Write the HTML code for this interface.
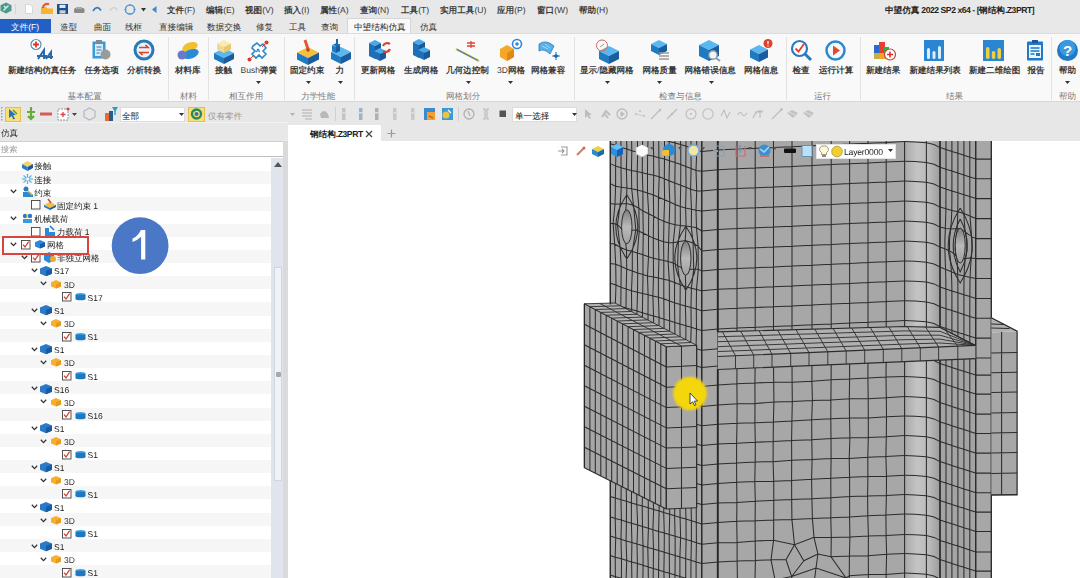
<!DOCTYPE html>
<html><head><meta charset="utf-8"><style>
html,body{margin:0;padding:0}
body{width:1080px;height:578px;overflow:hidden;position:relative;background:#fff;font-family:"Liberation Sans",sans-serif}
.t{position:absolute;white-space:nowrap;line-height:1;font-weight:700;text-rendering:geometricPrecision}
svg{overflow:visible}
.l{font-weight:400}
</style></head><body>
<div id="root" style="position:absolute;left:0;top:0;width:1080px;height:578px;overflow:hidden;filter:blur(0.4px)">
<div style="position:absolute;left:0px;top:0px;width:1080px;height:19px;background:#e8e8e8"></div>
<svg style="position:absolute;left:0px;top:2px" width="12" height="12" viewBox="0 0 12 12"><polygon points="6,0.5 11.5,3.3 11.5,8.7 6,11.5 0.5,8.7 0.5,3.3" fill="#4a9a8a"/><path d="M3.5 8.5 L8.5 3.5 M4 4 L6 6" stroke="#d8f0e8" stroke-width="1.4"/></svg>
<div style="position:absolute;left:15px;top:4px;width:1px;height:10px;background:#d4d4d4"></div>
<svg style="position:absolute;left:25px;top:4px" width="8" height="10" viewBox="0 0 8 10"><path d="M0.5 0.5h4.5l2.5 2.5v6.5h-7z" fill="#fdfdfd" stroke="#cfcfcf" stroke-width="0.8"/></svg>
<svg style="position:absolute;left:41px;top:3px" width="12" height="11" viewBox="0 0 12 11"><path d="M0 4h5l1.5 1.5H12V11H0z" fill="#f6b430"/><path d="M2 5 A4 4 0 0 1 8 1.5" stroke="#e85a2a" stroke-width="2.2" fill="none"/></svg>
<svg style="position:absolute;left:57px;top:3.5px" width="11" height="10" viewBox="0 0 11 10"><rect x="0" y="0" width="11" height="10" fill="#1f4f8a"/><rect x="2.5" y="0.8" width="6" height="3.2" fill="#dfe8f2"/><rect x="2.5" y="6.3" width="6" height="3.2" fill="#c8d2dc"/></svg>
<svg style="position:absolute;left:74px;top:6.5px" width="11" height="6" viewBox="0 0 11 6"><rect x="0" y="1" width="10.5" height="5" rx="1.5" fill="#8a8a8a"/><rect x="2" y="0" width="6" height="2" fill="#aaa"/></svg>
<svg style="position:absolute;left:92px;top:5.5px" width="10" height="6" viewBox="0 0 10 6"><path d="M1 5 Q5 -1.5 9 4.5" stroke="#3a7ab8" stroke-width="1.8" fill="none"/></svg>
<svg style="position:absolute;left:109px;top:5.5px" width="9" height="5" viewBox="0 0 9 5"><path d="M0.8 4.5 Q4.5 -1 8.3 4" stroke="#cfcfcf" stroke-width="1.5" fill="none"/></svg>
<svg style="position:absolute;left:124px;top:3.5px" width="12" height="11" viewBox="0 0 12 11"><circle cx="6" cy="5.5" r="4.6" stroke="#5a9ad0" stroke-width="1.5" fill="none"/><path d="M6 0 v2 M6 9 v2 M0.5 5.5 h2 M9.5 5.5 h2" stroke="#5a9ad0" stroke-width="1.2"/></svg>
<svg style="position:absolute;left:141px;top:8px" width="5" height="3.5" viewBox="0 0 5 3.5"><polygon points="0,0 5,0 2.5,3.5" fill="#333"/></svg>
<svg style="position:absolute;left:152px;top:6px" width="5" height="7" viewBox="0 0 5 7"><polygon points="4.5,0 4.5,7 0,3.5" fill="#3a8ad0"/></svg>
<div class="t" style="left:167px;top:6.45px;font-size:8.6px;color:#3a3a3a;">文件<span class="l">(F)</span></div>
<div class="t" style="left:206px;top:6.45px;font-size:8.6px;color:#3a3a3a;">编辑<span class="l">(E)</span></div>
<div class="t" style="left:245px;top:6.45px;font-size:8.6px;color:#3a3a3a;">视图<span class="l">(V)</span></div>
<div class="t" style="left:284px;top:6.45px;font-size:8.6px;color:#3a3a3a;">插入<span class="l">(I)</span></div>
<div class="t" style="left:320px;top:6.45px;font-size:8.6px;color:#3a3a3a;">属性<span class="l">(A)</span></div>
<div class="t" style="left:360px;top:6.45px;font-size:8.6px;color:#3a3a3a;">查询<span class="l">(N)</span></div>
<div class="t" style="left:401px;top:6.45px;font-size:8.6px;color:#3a3a3a;">工具<span class="l">(T)</span></div>
<div class="t" style="left:440px;top:6.45px;font-size:8.6px;color:#3a3a3a;">实用工具<span class="l">(U)</span></div>
<div class="t" style="left:497px;top:6.45px;font-size:8.6px;color:#3a3a3a;">应用<span class="l">(P)</span></div>
<div class="t" style="left:537px;top:6.45px;font-size:8.6px;color:#3a3a3a;">窗口<span class="l">(W)</span></div>
<div class="t" style="left:579px;top:6.45px;font-size:8.6px;color:#3a3a3a;">帮助<span class="l">(H)</span></div>
<div class="t" style="left:885px;top:6.45px;font-size:8.6px;color:#222">中望仿真<span style="letter-spacing:-0.45px"> 2022 SP2 x64 - [</span>钢结构<span style="letter-spacing:-0.45px">.Z3PRT]</span></div>
<div style="position:absolute;left:0px;top:18px;width:1080px;height:15.5px;background:#e8e8e8"></div>
<div style="position:absolute;left:0px;top:18.5px;width:51px;height:14.5px;background:#2360c4"></div>
<div class="t" style="left:11px;top:23.10px;font-size:8.6px;color:#ffffff;font-weight:500">文件<span class="l">(F)</span></div>
<div class="t" style="left:60px;top:23.10px;font-size:8.6px;color:#333;font-weight:500">造型</div>
<div class="t" style="left:94px;top:23.10px;font-size:8.6px;color:#333;font-weight:500">曲面</div>
<div class="t" style="left:125px;top:23.10px;font-size:8.6px;color:#333;font-weight:500">线框</div>
<div class="t" style="left:159px;top:23.10px;font-size:8.6px;color:#333;font-weight:500">直接编辑</div>
<div class="t" style="left:207px;top:23.10px;font-size:8.6px;color:#333;font-weight:500">数据交换</div>
<div class="t" style="left:256px;top:23.10px;font-size:8.6px;color:#333;font-weight:500">修复</div>
<div class="t" style="left:289px;top:23.10px;font-size:8.6px;color:#333;font-weight:500">工具</div>
<div class="t" style="left:321px;top:23.10px;font-size:8.6px;color:#333;font-weight:500">查询</div>
<div class="t" style="left:420px;top:23.10px;font-size:8.6px;color:#333;font-weight:500">仿真</div>
<div style="position:absolute;left:347px;top:18px;width:64px;height:17px;background:#f9f9f9;border:1px solid #d6d6d6;border-bottom:none;box-sizing:border-box"></div>
<div class="t" style="left:354px;top:23.10px;font-size:8.6px;color:#222;font-weight:500">中望结构仿真</div>
<div style="position:absolute;left:0px;top:33px;width:1080px;height:69px;background:#f9f9f9;border-top:1px solid #dcdcdc;border-bottom:1px solid #d8d8d8;box-sizing:border-box"></div>
<div style="position:absolute;left:168px;top:37px;width:1px;height:63px;background:#e2e2e2"></div>
<div style="position:absolute;left:208px;top:37px;width:1px;height:63px;background:#e2e2e2"></div>
<div style="position:absolute;left:284px;top:37px;width:1px;height:63px;background:#e2e2e2"></div>
<div style="position:absolute;left:354px;top:37px;width:1px;height:63px;background:#e2e2e2"></div>
<div style="position:absolute;left:574px;top:37px;width:1px;height:63px;background:#e2e2e2"></div>
<div style="position:absolute;left:786px;top:37px;width:1px;height:63px;background:#e2e2e2"></div>
<div style="position:absolute;left:860px;top:37px;width:1px;height:63px;background:#e2e2e2"></div>
<div style="position:absolute;left:1051px;top:37px;width:1px;height:63px;background:#e2e2e2"></div>
<div class="t" style="left:8px;top:66.32px;font-size:8.55px;color:#3a3a3a;">新建结构仿真任务</div>
<div class="t" style="left:84.5px;top:66.32px;font-size:8.55px;color:#3a3a3a;">任务选项</div>
<div class="t" style="left:127px;top:66.32px;font-size:8.55px;color:#3a3a3a;">分析转换</div>
<div class="t" style="left:175px;top:66.32px;font-size:8.55px;color:#3a3a3a;">材料库</div>
<div class="t" style="left:215px;top:66.32px;font-size:8.55px;color:#3a3a3a;">接触</div>
<div class="t" style="left:240.5px;top:66.32px;font-size:8.55px;color:#3a3a3a;"><span class="l">Bush</span>弹簧</div>
<div class="t" style="left:290px;top:66.32px;font-size:8.55px;color:#3a3a3a;">固定约束</div>
<div class="t" style="left:335.5px;top:66.32px;font-size:8.55px;color:#3a3a3a;">力</div>
<div class="t" style="left:361px;top:66.32px;font-size:8.55px;color:#3a3a3a;">更新网格</div>
<div class="t" style="left:404px;top:66.32px;font-size:8.55px;color:#3a3a3a;">生成网格</div>
<div class="t" style="left:446px;top:66.32px;font-size:8.55px;color:#3a3a3a;">几何边控制</div>
<div class="t" style="left:497px;top:66.32px;font-size:8.55px;color:#3a3a3a;"><span class="l">3D</span>网格</div>
<div class="t" style="left:531px;top:66.32px;font-size:8.55px;color:#3a3a3a;">网格兼容</div>
<div class="t" style="left:580px;top:66.32px;font-size:8.55px;color:#3a3a3a;">显示<span class="l">/</span>隐藏网格</div>
<div class="t" style="left:642.5px;top:66.32px;font-size:8.55px;color:#3a3a3a;">网格质量</div>
<div class="t" style="left:684.5px;top:66.32px;font-size:8.55px;color:#3a3a3a;">网格错误信息</div>
<div class="t" style="left:744px;top:66.32px;font-size:8.55px;color:#3a3a3a;">网格信息</div>
<div class="t" style="left:792.5px;top:66.32px;font-size:8.55px;color:#3a3a3a;">检查</div>
<div class="t" style="left:819px;top:66.32px;font-size:8.55px;color:#3a3a3a;">运行计算</div>
<div class="t" style="left:866px;top:66.32px;font-size:8.55px;color:#3a3a3a;">新建结果</div>
<div class="t" style="left:909.5px;top:66.32px;font-size:8.55px;color:#3a3a3a;">新建结果列表</div>
<div class="t" style="left:969px;top:66.32px;font-size:8.55px;color:#3a3a3a;">新建二维绘图</div>
<div class="t" style="left:1027.5px;top:66.32px;font-size:8.55px;color:#3a3a3a;">报告</div>
<div class="t" style="left:1059px;top:66.32px;font-size:8.55px;color:#3a3a3a;">帮助</div>
<div class="t" style="left:67.5px;top:91.82px;font-size:8.55px;color:#7a7a7a;font-weight:500">基本配置</div>
<div class="t" style="left:180px;top:91.82px;font-size:8.55px;color:#7a7a7a;font-weight:500">材料</div>
<div class="t" style="left:229px;top:91.82px;font-size:8.55px;color:#7a7a7a;font-weight:500">相互作用</div>
<div class="t" style="left:301px;top:91.82px;font-size:8.55px;color:#7a7a7a;font-weight:500">力学性能</div>
<div class="t" style="left:446px;top:91.82px;font-size:8.55px;color:#7a7a7a;font-weight:500">网格划分</div>
<div class="t" style="left:659px;top:91.82px;font-size:8.55px;color:#7a7a7a;font-weight:500">检查与信息</div>
<div class="t" style="left:814px;top:91.82px;font-size:8.55px;color:#7a7a7a;font-weight:500">运行</div>
<div class="t" style="left:946px;top:91.82px;font-size:8.55px;color:#7a7a7a;font-weight:500">结果</div>
<div class="t" style="left:1059px;top:91.82px;font-size:8.55px;color:#7a7a7a;font-weight:500">帮助</div>
<svg style="position:absolute;left:256px;top:81px" width="5" height="3" viewBox="0 0 5 3"><polygon points="0,0 5,0 2.5,3" fill="#333"/></svg>
<svg style="position:absolute;left:306px;top:81px" width="5" height="3" viewBox="0 0 5 3"><polygon points="0,0 5,0 2.5,3" fill="#333"/></svg>
<svg style="position:absolute;left:338px;top:81px" width="5" height="3" viewBox="0 0 5 3"><polygon points="0,0 5,0 2.5,3" fill="#333"/></svg>
<svg style="position:absolute;left:466px;top:81px" width="5" height="3" viewBox="0 0 5 3"><polygon points="0,0 5,0 2.5,3" fill="#333"/></svg>
<svg style="position:absolute;left:508px;top:81px" width="5" height="3" viewBox="0 0 5 3"><polygon points="0,0 5,0 2.5,3" fill="#333"/></svg>
<svg style="position:absolute;left:605px;top:81px" width="5" height="3" viewBox="0 0 5 3"><polygon points="0,0 5,0 2.5,3" fill="#333"/></svg>
<svg style="position:absolute;left:657px;top:81px" width="5" height="3" viewBox="0 0 5 3"><polygon points="0,0 5,0 2.5,3" fill="#333"/></svg>
<svg style="position:absolute;left:709px;top:81px" width="5" height="3" viewBox="0 0 5 3"><polygon points="0,0 5,0 2.5,3" fill="#333"/></svg>
<svg style="position:absolute;left:1065px;top:81px" width="5" height="3" viewBox="0 0 5 3"><polygon points="0,0 5,0 2.5,3" fill="#333"/></svg>
<svg style="position:absolute;left:30px;top:39px" width="26" height="23" viewBox="0 0 26 23"><circle cx="6" cy="5.5" r="5" fill="#fff" stroke="#5a8fb0" stroke-width="1.2"/><path d="M6 2.5v6M3 5.5h6" stroke="#e0302a" stroke-width="1.8"/><path d="M8 20 L14 11 L14 20 M7 17 H17 M16 20 L21 13 L21 20 M15 18 H23" stroke="#2a6aa8" stroke-width="2" fill="none"/></svg>
<svg style="position:absolute;left:91px;top:39px" width="20" height="22" viewBox="0 0 20 22"><rect x="1.5" y="2.5" width="13" height="17" fill="#3a9ad8"/><rect x="4" y="5" width="8" height="12" fill="#d8ecf8"/><rect x="5" y="1" width="6" height="3" fill="#7a8a9a"/><path d="M5.5 8h5M5.5 11h5M5.5 14h3" stroke="#3a7ab0" stroke-width="1"/><circle cx="14.5" cy="15.5" r="5" fill="#9a9a9a"/></svg>
<svg style="position:absolute;left:133px;top:39px" width="22" height="22" viewBox="0 0 22 22"><circle cx="11" cy="11" r="9" fill="#e8f2f8" stroke="#2a7ab8" stroke-width="3"/><path d="M6 8.5h9l-2.5-2.5M16 13.5H7l2.5 2.5" stroke="#e0402a" stroke-width="1.7" fill="none"/></svg>
<svg style="position:absolute;left:176px;top:39px" width="24" height="22" viewBox="0 0 24 22"><ellipse cx="14" cy="8" rx="8" ry="4.5" fill="#f0c030" transform="rotate(-20 14 8)"/><ellipse cx="15" cy="15" rx="8" ry="4.5" fill="#2a8ad8" transform="rotate(-20 15 15)"/><circle cx="6" cy="16" r="4.5" fill="#6a7ac8"/></svg>
<svg style="position:absolute;left:212px;top:39px" width="24" height="23" viewBox="0 0 24 23"><polygon points="12,9 22.0,14.0 12,19.0 2.0,14.0" fill="#5ab8f0"/><polygon points="2.0,14.0 12,19.0 12,25.0 2.0,20.0" fill="#1f7ac0"/><polygon points="22.0,14.0 12,19.0 12,25.0 22.0,20.0" fill="#1a5c9e"/><polygon points="12,1 19.0,4.5 12,8.0 5.0,4.5" fill="#f8eab0"/><polygon points="5.0,4.5 12,8.0 12,14.0 5.0,10.5" fill="#f0d890"/><polygon points="19.0,4.5 12,8.0 12,14.0 19.0,10.5" fill="#e8c870"/></svg>
<svg style="position:absolute;left:246px;top:39px" width="24" height="24" viewBox="0 0 24 24"><path d="M7 7 L11 4 L14 7 L17 5 L20 9 L17 12 L20 15 L16 19 L13 16 L10 19 L6 15 L9 12 L6 9 Z" fill="#fff" stroke="#2a8ac8" stroke-width="1.6"/><path d="M11 10 L14 13 M10 13 L13 10" stroke="#2a8ac8" stroke-width="1.2"/><circle cx="20.5" cy="3.5" r="2" fill="#d83a30"/><circle cx="3.5" cy="20.5" r="2" fill="#d83a30"/><path d="M19 5 L16 8 M5 19 L8 16" stroke="#d83a30" stroke-width="1"/></svg>
<svg style="position:absolute;left:296px;top:39px" width="24" height="23" viewBox="0 0 24 23"><polygon points="12,8 23.0,13.5 12,19.0 1.0,13.5" fill="#f5c040"/><polygon points="1.0,13.5 12,19.0 12,26.0 1.0,20.5" fill="#1f7ac0"/><polygon points="23.0,13.5 12,19.0 12,26.0 23.0,20.5" fill="#1a5c9e"/><path d="M9 1 L12 10" stroke="#e05a30" stroke-width="3"/><circle cx="12" cy="11" r="1.8" fill="#c04020"/></svg>
<svg style="position:absolute;left:328px;top:39px" width="24" height="23" viewBox="0 0 24 23"><polygon points="13,8 23.0,13.0 13,18.0 3.0,13.0" fill="#5ab8f0"/><polygon points="3.0,13.0 13,18.0 13,25.0 3.0,20.0" fill="#1f7ac0"/><polygon points="23.0,13.0 13,18.0 13,25.0 23.0,20.0" fill="#1a5c9e"/><polygon points="8,4 12.0,6.0 8,8.0 4.0,6.0" fill="#5ab8f0"/><polygon points="4.0,6.0 8,8.0 8,14.0 4.0,12.0" fill="#1f7ac0"/><polygon points="12.0,6.0 8,8.0 8,14.0 12.0,12.0" fill="#1a5c9e"/><path d="M9 0 V7" stroke="#1a6ab0" stroke-width="2"/><polygon points="5.5,5 12.5,5 9,9" fill="#1a6ab0"/></svg>
<svg style="position:absolute;left:366px;top:40px" width="26" height="23" viewBox="0 0 26 23"><g transform="translate(1,0)"><polygon points="8,0 14.0,3.0 8,6.0 2.0,3.0" fill="#4aa8e8"/><polygon points="2.0,3.0 8,6.0 8,19.0 2.0,16.0" fill="#1f6fb8"/><polygon points="14.0,3.0 8,6.0 8,19.0 14.0,16.0" fill="#165a9a"/><polygon points="13,8 19.0,11.0 13,14.0 7.0,11.0" fill="#4aa8e8"/><polygon points="7.0,11.0 13,14.0 13,21.0 7.0,18.0" fill="#1f6fb8"/><polygon points="19.0,11.0 13,14.0 13,21.0 19.0,18.0" fill="#165a9a"/></g><path d="M17 6 A4.5 4.5 0 0 1 24 4" stroke="#e0402a" stroke-width="2.2" fill="none"/><path d="M24 9 A4.5 4.5 0 0 1 17 11" stroke="#e0402a" stroke-width="2.2" fill="none"/></svg>
<svg style="position:absolute;left:410px;top:39px" width="22" height="23" viewBox="0 0 22 23"><g transform="translate(1,0)"><polygon points="8,0 14.0,3.0 8,6.0 2.0,3.0" fill="#4aa8e8"/><polygon points="2.0,3.0 8,6.0 8,19.0 2.0,16.0" fill="#1f6fb8"/><polygon points="14.0,3.0 8,6.0 8,19.0 14.0,16.0" fill="#165a9a"/><polygon points="13,8 19.0,11.0 13,14.0 7.0,11.0" fill="#4aa8e8"/><polygon points="7.0,11.0 13,14.0 13,21.0 7.0,18.0" fill="#1f6fb8"/><polygon points="19.0,11.0 13,14.0 13,21.0 19.0,18.0" fill="#165a9a"/></g></svg>
<svg style="position:absolute;left:455px;top:39px" width="26" height="24" viewBox="0 0 26 24"><path d="M1 10 L24 22" stroke="#c8c870" stroke-width="2.4"/><path d="M2 10.5 L23 21.5" stroke="#3a6aa8" stroke-width="1"/><path d="M12 4h8M12 7h8" stroke="#e04030" stroke-width="1.4"/><path d="M16 2v7" stroke="#e04030" stroke-width="1.2"/></svg>
<svg style="position:absolute;left:499px;top:39px" width="24" height="23" viewBox="0 0 24 23"><polygon points="8,6 15,10 15,18 8,22 1,18 1,10" fill="#f5a828"/><polygon points="8,14 15,10 15,18 8,22" fill="#e08a18"/><circle cx="18" cy="5" r="4.5" fill="#fff" stroke="#2a8ad8" stroke-width="1.6"/><circle cx="18" cy="5" r="1.8" fill="#2a8ad8"/></svg>
<svg style="position:absolute;left:538px;top:38px" width="24" height="24" viewBox="0 0 24 24"><path d="M1 6 Q8 1 16 8 L12 16 Q6 10 1 13 Z" fill="#5ab0e8" stroke="#2a7ac0" stroke-width="0.8"/><path d="M4 8 L10 11 M7 6 L12 10" stroke="#b8e0f8" stroke-width="0.8"/><path d="M18 14 V22 M14 18 h8" stroke="#2a8ad0" stroke-width="1.2"/><polygon points="15,18 18,16 18,20" fill="#1a6ab0"/><polygon points="21,18 18,16 18,20" fill="#1a6ab0"/></svg>
<svg style="position:absolute;left:594px;top:39px" width="26" height="23" viewBox="0 0 26 23"><polygon points="15,7 25.0,12.0 15,17.0 5.0,12.0" fill="#5ab8f0"/><polygon points="5.0,12.0 15,17.0 15,25.0 5.0,20.0" fill="#1f7ac0"/><polygon points="25.0,12.0 15,17.0 15,25.0 25.0,20.0" fill="#1a5c9e"/><circle cx="8" cy="6.5" r="5.5" fill="none" stroke="#c86a60" stroke-width="1"/><path d="M6 8 L10 5" stroke="#999" stroke-width="1"/></svg>
<svg style="position:absolute;left:649px;top:39px" width="22" height="23" viewBox="0 0 22 23"><polygon points="10,1 18.0,5.0 10,9.0 2.0,5.0" fill="#5ab8f0"/><polygon points="2.0,5.0 10,9.0 10,16.0 2.0,12.0" fill="#1f7ac0"/><polygon points="18.0,5.0 10,9.0 10,16.0 18.0,12.0" fill="#1a5c9e"/><path d="M10 14h10M10 17h10M10 20h10" stroke="#9a9a9a" stroke-width="1.5"/></svg>
<svg style="position:absolute;left:698px;top:39px" width="24" height="23" viewBox="0 0 24 23"><polygon points="11,1 21.0,6.0 11,11.0 1.0,6.0" fill="#5ab8f0"/><polygon points="1.0,6.0 11,11.0 11,22.0 1.0,17.0" fill="#1f7ac0"/><polygon points="21.0,6.0 11,11.0 11,22.0 21.0,17.0" fill="#1a5c9e"/><circle cx="15" cy="16" r="4.2" fill="#eef4f8" stroke="#8a9aa8" stroke-width="1.4"/><path d="M18 19 L22 22" stroke="#8a9aa8" stroke-width="2"/></svg>
<svg style="position:absolute;left:749px;top:39px" width="24" height="23" viewBox="0 0 24 23"><polygon points="10,6 19.0,10.5 10,15.0 1.0,10.5" fill="#5ab8f0"/><polygon points="1.0,10.5 10,15.0 10,23.0 1.0,18.5" fill="#1f7ac0"/><polygon points="19.0,10.5 10,15.0 10,23.0 19.0,18.5" fill="#1a5c9e"/><circle cx="19" cy="4.5" r="4.5" fill="#e0402a"/><path d="M19 2v3.2M19 6.5v1" stroke="#fff" stroke-width="1.3"/></svg>
<svg style="position:absolute;left:790px;top:39px" width="24" height="23" viewBox="0 0 24 23"><circle cx="9.5" cy="9.5" r="7.5" fill="#fff" stroke="#2a7ac0" stroke-width="2.2"/><path d="M15 15 L21 21" stroke="#2a7ac0" stroke-width="3"/><path d="M5.5 9.5 L8.5 12.5 L14 5" stroke="#e04030" stroke-width="1.8" fill="none"/></svg>
<svg style="position:absolute;left:824px;top:39px" width="23" height="23" viewBox="0 0 23 23"><circle cx="11.5" cy="11.5" r="9" fill="#f4f8fc" stroke="#2a8ad0" stroke-width="2.5"/><polygon points="9,6.5 16,11.5 9,16.5" fill="#e04a2a"/></svg>
<svg style="position:absolute;left:873px;top:39px" width="24" height="23" viewBox="0 0 24 23"><rect x="1" y="6" width="6" height="14" fill="#2a6ad0"/><rect x="6" y="3" width="6" height="17" fill="#e84030"/><rect x="11" y="8" width="5" height="12" fill="#30b040"/><path d="M1 14 h15 v6 h-15z" fill="#f0c020" opacity="0.8"/><circle cx="17" cy="15.5" r="5.5" fill="#fff" stroke="#c84040" stroke-width="1.2"/><path d="M17 12.5v6M14 15.5h6" stroke="#e0302a" stroke-width="1.6"/></svg>
<svg style="position:absolute;left:923px;top:39px" width="22" height="23" viewBox="0 0 22 23"><rect x="1" y="1" width="20" height="21" fill="#2a86d2"/><rect x="4" y="9" width="3" height="11" rx="1.5" fill="#d8eefc"/><rect x="9.5" y="12" width="3" height="8" rx="1.5" fill="#d8eefc"/><rect x="15" y="7" width="3" height="13" rx="1.5" fill="#d8eefc"/></svg>
<svg style="position:absolute;left:982px;top:39px" width="23" height="23" viewBox="0 0 23 23"><rect x="1" y="1" width="21" height="21" fill="#2a86d2"/><rect x="4" y="8" width="3.5" height="12" rx="1.7" fill="#f0d040"/><rect x="9.8" y="12" width="3.5" height="8" rx="1.7" fill="#f0d040"/><rect x="15.5" y="9" width="3.5" height="11" rx="1.7" fill="#f0d040"/></svg>
<svg style="position:absolute;left:1026px;top:39px" width="19" height="23" viewBox="0 0 19 23"><rect x="1" y="2.5" width="16" height="19" rx="1" fill="#1f78c8"/><rect x="3" y="6" width="12" height="13" fill="#eaf4fc"/><rect x="6" y="1" width="6" height="3" fill="#1a5a98"/><path d="M4.5 9h9M4.5 12h9M4.5 15h4" stroke="#1f78c8" stroke-width="1.3"/><rect x="10" y="14" width="4" height="3" fill="#1f78c8"/></svg>
<svg style="position:absolute;left:1056px;top:39px" width="23" height="23" viewBox="0 0 23 23"><circle cx="11.5" cy="11.5" r="10.5" fill="#1f7ac8"/><circle cx="11.5" cy="9" r="8" fill="#3a9ae0"/><text x="11.5" y="17" text-anchor="middle" font-family="Liberation Sans" font-weight="bold" font-size="15" fill="#fff">?</text></svg>
<div style="position:absolute;left:0px;top:102px;width:1080px;height:39px;background:#e7e7e7"></div>
<div style="position:absolute;left:0px;top:122px;width:288px;height:1px;background:#f2f2f2"></div>
<svg style="position:absolute;left:1px;top:107px" width="2" height="14" viewBox="0 0 2 14"><g fill="#9aa4b0"><rect x="0" y="0" width="1.5" height="1.5"/><rect x="0" y="3" width="1.5" height="1.5"/><rect x="0" y="6" width="1.5" height="1.5"/><rect x="0" y="9" width="1.5" height="1.5"/><rect x="0" y="12" width="1.5" height="1.5"/></g></svg>
<div style="position:absolute;left:5px;top:106.5px;width:15.5px;height:15.5px;background:#f7df7a;border:1px solid #e2c04a;box-sizing:border-box"></div>
<svg style="position:absolute;left:7px;top:108px" width="12" height="12" viewBox="0 0 12 12"><path d="M2 1 L2 10 L4.5 8 L6.5 11.5 L8 10.7 L6 7.3 L9 7 Z" fill="#2a70c0"/><path d="M6 2 L10 6" stroke="#40a040" stroke-width="1.4"/></svg>
<svg style="position:absolute;left:26px;top:107px" width="10" height="13" viewBox="0 0 10 13"><path d="M5 0 V12 M1 5 H9 M2 9 L5 12 L8 9" stroke="#6aaa3a" stroke-width="2.2" fill="none"/></svg>
<svg style="position:absolute;left:40px;top:112px" width="12" height="4" viewBox="0 0 12 4"><rect x="0" y="0.5" width="12" height="3" fill="#d85a5a"/></svg>
<svg style="position:absolute;left:57px;top:107px" width="13" height="14" viewBox="0 0 13 14"><rect x="1" y="2" width="10" height="11" fill="#fff" stroke="#8a9aa8" stroke-width="1" stroke-dasharray="2 1"/><path d="M6 5v5M3.5 7.5h5" stroke="#e04040" stroke-width="1.3"/><circle cx="11" cy="2" r="1.6" fill="#d04040"/></svg>
<svg style="position:absolute;left:72px;top:113px" width="5" height="3" viewBox="0 0 5 3"><polygon points="0,0 5,0 2.5,3" fill="#444"/></svg>
<svg style="position:absolute;left:83px;top:107px" width="13" height="14" viewBox="0 0 13 14"><polygon points="6.5,1 12,4 12,10 6.5,13 1,10 1,4" fill="none" stroke="#b0b8c0" stroke-width="1.2"/></svg>
<svg style="position:absolute;left:104px;top:107px" width="14" height="14" viewBox="0 0 14 14"><rect x="1" y="6" width="4" height="8" fill="#e86a30"/><rect x="5" y="4" width="4" height="10" fill="#2a5a8a"/><polygon points="8,0 14,0 11,5" fill="#2a9ac8"/><rect x="10.3" y="4" width="1.4" height="4" fill="#2a9ac8"/></svg>
<div style="position:absolute;left:120px;top:107.4px;width:65px;height:14.6px;background:#fff;border:1px solid #dcdcdc;box-sizing:border-box"></div>
<div class="t" style="left:122px;top:111.50px;font-size:8.6px;color:#111;font-weight:500">全部</div>
<svg style="position:absolute;left:179px;top:113px" width="5" height="3" viewBox="0 0 5 3"><polygon points="0,0 5,0 2.5,3" fill="#333"/></svg>
<div style="position:absolute;left:188.3px;top:106.5px;width:16.5px;height:15.5px;background:#f7df7a;border:1px solid #e2c04a;box-sizing:border-box"></div>
<svg style="position:absolute;left:190px;top:108px" width="13" height="12" viewBox="0 0 13 12"><circle cx="6.5" cy="6" r="4.5" fill="none" stroke="#2a8a5a" stroke-width="2.4"/><path d="M3 2 L6 1 L5 4" fill="#2a8a5a"/><circle cx="6.5" cy="6" r="2" fill="#3a70b0"/></svg>
<div class="t" style="left:207.8px;top:111.50px;font-size:8.6px;color:#999;font-weight:500">仅有零件</div>
<svg style="position:absolute;left:290px;top:113px" width="5" height="3" viewBox="0 0 5 3"><polygon points="0,0 5,0 2.5,3" fill="#b0b0b0"/></svg>
<svg style="position:absolute;left:301px;top:108px" width="12" height="12" viewBox="0 0 12 12"><path d="M1 2h10M1 5h10M1 8h10M4 11h7" stroke="#b0b0b0" stroke-width="1.2"/></svg>
<svg style="position:absolute;left:318px;top:108px" width="12" height="12" viewBox="0 0 12 12"><path d="M2 6 Q6 0 10 6 L11 10 H3z" fill="#b8b8b8"/></svg>
<div style="position:absolute;left:334.5px;top:107px;width:1px;height:14px;background:#d0d0d0"></div>
<svg style="position:absolute;left:341px;top:108px" width="6" height="12" viewBox="0 0 6 12"><rect x="1" y="0" width="3.5" height="12" fill="#c4c4c4"/><rect x="0" y="4" width="5.5" height="1.5" fill="#ddd"/></svg>
<svg style="position:absolute;left:357.5px;top:108px" width="6" height="12" viewBox="0 0 6 12"><rect x="1" y="0" width="3.5" height="12" fill="#9ab4cc"/><rect x="0" y="4" width="5.5" height="1.5" fill="#ddd"/></svg>
<svg style="position:absolute;left:374px;top:108px" width="6" height="12" viewBox="0 0 6 12"><rect x="1" y="0" width="3.5" height="12" fill="#b8aab8"/><rect x="0" y="4" width="5.5" height="1.5" fill="#ddd"/></svg>
<svg style="position:absolute;left:392px;top:108px" width="6" height="12" viewBox="0 0 6 12"><rect x="1" y="0" width="3.5" height="12" fill="#c8c8c8"/><rect x="0" y="4" width="5.5" height="1.5" fill="#ddd"/></svg>
<svg style="position:absolute;left:410px;top:108px" width="6" height="12" viewBox="0 0 6 12"><rect x="1" y="0" width="3.5" height="12" fill="#c8c8c8"/><rect x="0" y="4" width="5.5" height="1.5" fill="#ddd"/></svg>
<svg style="position:absolute;left:424px;top:107px" width="12" height="14" viewBox="0 0 12 14"><rect x="0" y="1" width="11" height="12" fill="#3a8ad0"/><rect x="3" y="5" width="8" height="8" fill="#f0a030"/><path d="M5 9 L9 11" stroke="#c04a20" stroke-width="1.2"/></svg>
<svg style="position:absolute;left:441px;top:107px" width="12" height="14" viewBox="0 0 12 14"><rect x="1" y="1" width="11" height="12" fill="#3a9ad8"/><circle cx="5" cy="8" r="3.5" fill="#f0c040"/><path d="M7 3 L10 6" stroke="#fff" stroke-width="1.2"/></svg>
<div style="position:absolute;left:457.8px;top:107px;width:1px;height:14px;background:#d0d0d0"></div>
<svg style="position:absolute;left:463px;top:107px" width="12" height="14" viewBox="0 0 12 14"><circle cx="6" cy="7" r="5" fill="none" stroke="#b0b0b0" stroke-width="1.3"/><path d="M5 4 L7 9" stroke="#b0b0b0" stroke-width="1.2"/></svg>
<svg style="position:absolute;left:482px;top:107px" width="8" height="14" viewBox="0 0 8 14"><path d="M1 2 H3 V12 H1 M7 2 H5 V12 H7" stroke="#b8b8b8" stroke-width="1.1" fill="none"/></svg>
<svg style="position:absolute;left:499px;top:110px" width="8" height="8" viewBox="0 0 8 8"><rect x="0.5" y="0.5" width="6.5" height="6.5" fill="#555"/></svg>
<div style="position:absolute;left:512.4px;top:107.4px;width:64.6px;height:14.6px;background:#fff;border:1px solid #dcdcdc;box-sizing:border-box"></div>
<div class="t" style="left:515px;top:111.50px;font-size:8.6px;color:#111;font-weight:500">单一选择</div>
<svg style="position:absolute;left:572px;top:113px" width="5" height="3" viewBox="0 0 5 3"><polygon points="0,0 5,0 2.5,3" fill="#333"/></svg>
<svg style="position:absolute;left:584px;top:108px" width="13" height="13" viewBox="0 0 13 13"><path d="M1 1 L1 10 L3.5 8 L5.5 11 L7 10 L5 7 L8 7 Z" fill="#bdbdbd"/></svg>
<svg style="position:absolute;left:600px;top:108px" width="13" height="13" viewBox="0 0 13 13"><path d="M2 9 L6 3 L10 7 M4 5 L8 10" stroke="#bdbdbd" stroke-width="2" fill="none"/></svg>
<svg style="position:absolute;left:616px;top:108px" width="13" height="13" viewBox="0 0 13 13"><circle cx="6" cy="6" r="5" fill="none" stroke="#bdbdbd" stroke-width="1.4"/><polygon points="4.5,3 9,6 4.5,9" fill="#bdbdbd"/></svg>
<svg style="position:absolute;left:634px;top:108px" width="13" height="13" viewBox="0 0 13 13"><circle cx="2" cy="6" r="1" fill="#bdbdbd"/><circle cx="6" cy="3" r="1" fill="#bdbdbd"/><circle cx="10" cy="8" r="1" fill="#bdbdbd"/><path d="M2 6 L10 8" stroke="#c8c8c8" stroke-width="0.8"/></svg>
<svg style="position:absolute;left:650px;top:108px" width="13" height="13" viewBox="0 0 13 13"><path d="M1 11 L11 1" stroke="#bdbdbd" stroke-width="1.2"/><circle cx="10" cy="2" r="1.2" fill="#bdbdbd"/></svg>
<svg style="position:absolute;left:666px;top:108px" width="13" height="13" viewBox="0 0 13 13"><path d="M1 11 L11 1" stroke="#bdbdbd" stroke-width="1.2"/><circle cx="6" cy="6" r="1.2" fill="#bdbdbd"/></svg>
<svg style="position:absolute;left:685px;top:108px" width="13" height="13" viewBox="0 0 13 13"><circle cx="6" cy="6" r="5" fill="none" stroke="#bdbdbd" stroke-width="1.1"/><circle cx="6" cy="6" r="1" fill="#bdbdbd"/></svg>
<svg style="position:absolute;left:702px;top:108px" width="13" height="13" viewBox="0 0 13 13"><circle cx="6" cy="6" r="5.2" fill="none" stroke="#bdbdbd" stroke-width="1.1"/></svg>
<svg style="position:absolute;left:720px;top:108px" width="13" height="13" viewBox="0 0 13 13"><path d="M1 8 L4 2 L7 10 L10 4" stroke="#bdbdbd" stroke-width="1.1" fill="none"/></svg>
<svg style="position:absolute;left:737px;top:108px" width="13" height="13" viewBox="0 0 13 13"><path d="M1 7 Q3 2 5 6 T10 5" stroke="#bdbdbd" stroke-width="1.1" fill="none"/></svg>
<svg style="position:absolute;left:752px;top:108px" width="13" height="13" viewBox="0 0 13 13"><path d="M1 10 Q5 0 11 4 M3 4 H10 M8 4 V10" stroke="#bdbdbd" stroke-width="1.1" fill="none"/></svg>
<svg style="position:absolute;left:771px;top:108px" width="13" height="13" viewBox="0 0 13 13"><path d="M1 11 L11 1" stroke="#bdbdbd" stroke-width="1.2"/><circle cx="10.5" cy="1.5" r="1.3" fill="#bdbdbd"/></svg>
<svg style="position:absolute;left:786px;top:108px" width="13" height="13" viewBox="0 0 13 13"><path d="M1 5 L6 2 L12 5 L7 10 Z" fill="#c2c2c2"/><path d="M3 4 L9 7" stroke="#e0e0e0" stroke-width="1"/></svg>
<svg style="position:absolute;left:802px;top:108px" width="13" height="13" viewBox="0 0 13 13"><path d="M1 5 L6 2 L12 5 L7 10 Z" fill="#c2c2c2"/><path d="M3 4 L9 7" stroke="#e0e0e0" stroke-width="1"/></svg>
<div style="position:absolute;left:0px;top:123px;width:288px;height:18px;background:#e8e8e8"></div>
<div class="t" style="left:1px;top:129.30px;font-size:8.6px;color:#2a2a2a;font-weight:500">仿真</div>
<div style="position:absolute;left:0px;top:141px;width:288px;height:1px;background:#d0d0d0"></div>
<div style="position:absolute;left:0px;top:142px;width:285px;height:15px;background:#ffffff;border-bottom:1px solid #bdbdbd;box-sizing:border-box"></div>
<div class="t" style="left:1px;top:146.45px;font-size:8.2px;color:#9a9a9a;font-weight:500">搜索</div>
<div style="position:absolute;left:0px;top:157px;width:288px;height:421px;background:#ffffff"></div>
<div style="position:absolute;left:288px;top:125px;width:93px;height:16px;background:#ffffff"></div>
<div class="t" style="left:310px;top:129.80px;font-size:8.6px;color:#1a1a1a">钢结构<span style="letter-spacing:-0.45px">.Z3PRT</span></div>
<svg style="position:absolute;left:365px;top:129.5px" width="8" height="8" viewBox="0 0 8 8"><path d="M1 1 L7 7 M7 1 L1 7" stroke="#444" stroke-width="1.3"/></svg>
<svg style="position:absolute;left:387px;top:129px" width="9" height="9" viewBox="0 0 9 9"><path d="M4.5 0.5 V8.5 M0.5 4.5 H8.5" stroke="#9a9a9a" stroke-width="1.2"/></svg>
<div style="position:absolute;left:288px;top:141px;width:792px;height:437px;background:#ffffff"></div>
<svg style="position:absolute;left:0;top:0" width="1080" height="578" viewBox="0 0 1080 578"><defs><clipPath id="vp"><rect x="288" y="141" width="792" height="437"/></clipPath><linearGradient id="fil" x1="0" x2="1" y1="0" y2="0"><stop offset="0" stop-color="#a9a9a9"/><stop offset="0.35" stop-color="#c4c4c4"/><stop offset="0.7" stop-color="#b9b9b9"/><stop offset="1" stop-color="#9c9c9c"/></linearGradient><linearGradient id="hole" x1="0" x2="0" y1="0" y2="1"><stop offset="0" stop-color="#7e7e7e"/><stop offset="0.5" stop-color="#bababa"/><stop offset="1" stop-color="#a0a0a0"/></linearGradient></defs><g clip-path="url(#vp)"><polygon points="610.3,100.0 701.8,100.0 701.8,600.0 610.3,600.0" fill="#a7a7a7" stroke="none" stroke-width="0"/><path d="M610.3 100.0 L610.3 104.0 L610.3 124.0 L610.3 143.8 L610.3 163.6 L610.3 183.6 L610.3 203.6 L610.3 223.6 L610.3 243.4 L610.3 263.4 L610.3 283.2 L610.3 303.1 L610.3 322.9 L610.3 340.1 L610.3 359.1 L610.3 379.1 L610.3 398.4 L610.3 418.1 L610.3 438.1 L610.3 457.7 L610.3 477.1 L610.3 496.4 L610.3 516.8 L610.3 536.0 L610.3 555.5 L610.3 575.0 L610.3 600.0 M615.7 100.0 L615.6 105.6 L615.7 125.6 L616.1 145.6 L615.6 166.1 L615.6 186.2 L615.0 204.3 L613.1 223.4 L614.7 244.1 L615.7 264.2 L616.0 285.1 L615.3 304.7 L615.5 324.5 L615.3 341.7 L616.0 360.7 L615.9 380.7 L615.2 400.0 L616.2 419.7 L616.1 439.7 L615.8 459.3 L615.8 478.7 L615.3 498.1 L615.2 518.5 L615.7 537.7 L615.2 557.2 L615.4 576.7 L615.7 600.0 M621.1 100.0 L620.8 107.2 L620.6 127.3 L621.0 147.4 L621.0 167.7 L621.3 187.2 L620.2 203.8 L617.5 224.7 L620.1 247.2 L621.2 266.6 L621.0 287.2 L620.8 306.3 L621.6 326.1 L621.6 343.3 L621.4 362.3 L621.3 382.3 L620.9 401.6 L620.8 421.3 L620.9 441.3 L620.6 460.9 L621.3 480.3 L621.0 499.7 L621.4 520.1 L621.0 539.3 L621.5 558.8 L621.4 578.3 L621.1 600.0 M626.4 100.0 L625.9 108.9 L626.2 129.0 L626.9 149.1 L626.4 169.2 L626.9 187.9 L626.3 203.5 L624.3 231.7 L626.5 250.0 L626.7 269.0 L626.2 289.1 L626.0 307.9 L626.3 327.7 L626.9 344.9 L626.7 363.9 L626.1 383.9 L626.2 403.2 L626.0 422.9 L626.0 442.9 L626.7 462.5 L626.1 481.9 L626.5 501.3 L626.4 521.7 L626.1 540.9 L626.7 560.4 L626.1 579.9 L626.4 600.0 M631.8 100.0 L632.0 110.5 L631.4 130.7 L631.8 150.8 L631.5 170.5 L631.7 188.8 L633.5 205.2 L635.8 229.8 L632.3 251.6 L632.3 271.1 L631.5 290.8 L631.7 309.5 L632.2 329.3 L632.0 346.5 L631.4 365.5 L632.3 385.5 L631.5 404.8 L631.6 424.5 L632.1 444.5 L631.7 464.1 L631.6 483.5 L631.4 502.9 L631.4 523.3 L631.9 542.5 L631.6 562.0 L631.9 581.5 L631.8 600.0 M637.2 100.0 L637.1 112.2 L637.2 132.4 L637.7 152.3 L637.2 171.6 L637.4 190.0 L638.9 208.2 L639.2 231.2 L637.4 253.1 L637.7 273.0 L637.5 292.2 L637.0 311.1 L636.9 330.9 L637.5 348.1 L637.7 367.1 L636.9 387.1 L637.7 406.4 L637.6 426.1 L637.3 446.1 L637.1 465.7 L636.8 485.1 L636.8 504.5 L637.7 524.9 L637.0 544.1 L637.4 563.6 L637.0 583.1 L637.2 600.0 M642.6 100.0 L642.9 113.9 L642.7 134.1 L642.4 153.7 L642.3 172.7 L642.9 191.5 L642.9 211.1 L643.3 233.3 L642.9 254.8 L643.0 274.6 L642.7 293.5 L642.4 312.7 L643.0 332.5 L642.3 349.7 L642.1 368.7 L642.4 388.7 L642.5 408.0 L642.2 427.7 L642.3 447.7 L642.5 467.3 L642.7 486.7 L642.2 506.1 L642.5 526.5 L643.0 545.7 L643.1 565.2 L642.8 584.7 L642.6 600.0 M648.0 100.0 L648.2 115.5 L648.1 135.6 L647.6 155.0 L647.5 173.9 L647.5 193.1 L648.7 213.7 L648.5 235.7 L648.5 256.7 L647.5 275.9 L648.1 294.7 L648.0 314.4 L648.2 334.2 L647.8 351.4 L648.5 370.4 L647.6 390.4 L648.0 409.7 L648.2 429.4 L648.4 449.4 L648.2 469.0 L648.2 488.4 L648.3 507.8 L648.4 528.2 L647.8 547.4 L648.2 566.9 L648.4 586.4 L648.0 600.0 M653.4 100.0 L653.7 117.1 L653.3 137.1 L653.6 156.3 L653.7 175.3 L653.4 195.1 L653.6 216.3 L653.3 238.1 L653.4 258.3 L653.5 277.1 L652.9 295.9 L653.5 316.0 L653.9 335.8 L653.7 353.0 L653.6 372.0 L653.2 392.0 L653.6 411.3 L653.4 431.0 L653.3 451.0 L653.7 470.6 L652.9 490.0 L653.6 509.4 L652.9 529.8 L653.5 549.0 L653.3 568.5 L653.1 588.0 L653.4 600.0 M658.7 100.0 L658.9 118.7 L658.7 138.5 L658.9 157.7 L659.2 176.8 L658.5 197.3 L658.3 218.9 L658.5 240.1 L658.9 259.6 L658.4 278.1 L658.4 297.2 L659.1 317.6 L658.9 337.4 L658.7 354.6 L659.1 373.6 L658.6 393.6 L658.9 412.9 L658.4 432.6 L658.7 452.6 L659.0 472.2 L659.2 491.6 L659.1 511.0 L658.6 531.4 L658.8 550.6 L658.6 570.1 L658.4 589.6 L658.7 600.0 M664.1 100.0 L664.1 120.3 L664.5 140.0 L664.5 159.1 L664.3 178.7 L664.6 199.7 L663.9 221.3 L663.6 241.7 L663.8 260.6 L663.8 279.2 L663.8 298.7 L664.0 319.2 L664.2 339.0 L664.1 356.2 L663.9 375.2 L664.5 395.2 L664.6 414.5 L664.1 434.2 L663.7 454.2 L663.7 473.8 L664.5 493.2 L663.7 512.6 L664.3 533.0 L664.2 552.2 L663.9 571.7 L664.4 591.2 L664.1 600.0 M669.5 100.0 L669.0 121.8 L669.1 141.4 L669.5 160.7 L669.0 180.7 L669.8 202.1 L669.2 223.3 L668.6 242.7 L668.1 261.5 L669.3 280.6 L669.4 301.1 L669.6 320.8 L669.7 340.6 L669.8 357.8 L670.0 376.8 L669.7 396.8 L669.2 416.1 L669.5 435.8 L669.2 455.8 L669.0 475.4 L669.5 494.8 L669.7 514.2 L669.2 534.6 L669.3 553.8 L669.4 573.3 L669.7 592.8 L669.5 600.0 M674.9 100.0 L674.9 123.3 L675.0 143.0 L675.1 162.5 L674.8 183.0 L675.2 204.4 L675.1 224.7 L673.2 242.7 L673.2 262.9 L674.6 282.4 L674.5 302.7 L674.8 322.4 L675.0 342.2 L675.3 359.4 L674.8 378.4 L675.0 398.4 L675.3 417.7 L675.2 437.4 L675.3 457.4 L674.9 477.0 L675.0 496.4 L674.6 515.8 L675.1 536.2 L675.2 555.4 L675.0 574.9 L675.1 594.4 L674.9 600.0 M680.3 100.0 L680.0 124.8 L680.7 144.6 L680.8 164.4 L680.7 185.2 L680.3 206.4 L680.4 225.5 L678.4 241.7 L677.6 265.6 L680.2 284.7 L680.1 304.4 L679.9 324.0 L680.2 343.8 L680.3 361.0 L680.5 380.0 L680.3 400.0 L679.8 419.3 L680.6 439.0 L679.8 459.0 L680.6 478.6 L679.9 498.0 L680.1 517.4 L680.6 537.8 L679.9 557.0 L679.9 576.5 L680.3 596.0 L680.3 600.0 M685.7 100.0 L685.9 126.4 L686.0 146.3 L685.8 166.4 L686.1 187.3 L685.6 208.0 L686.1 226.0 L685.2 240.6 L685.2 269.9 L685.7 286.7 L685.4 306.0 L685.9 325.7 L685.8 345.5 L685.7 362.7 L686.0 381.7 L685.7 401.7 L685.5 421.0 L685.5 440.7 L686.0 460.7 L686.1 480.3 L685.4 499.7 L686.0 519.1 L686.1 539.5 L685.7 558.7 L685.7 578.2 L685.4 597.7 L685.7 600.0 M691.0 100.0 L691.1 128.0 L691.0 148.1 L691.1 168.5 L690.6 189.3 L691.5 209.2 L691.3 226.7 L693.1 243.1 L693.7 269.1 L691.4 288.2 L691.0 307.6 L691.2 327.3 L690.6 347.1 L691.1 364.3 L690.9 383.3 L691.5 403.3 L691.5 422.6 L690.8 442.3 L691.0 462.3 L690.7 481.9 L691.0 501.3 L691.4 520.7 L691.4 541.1 L691.0 560.3 L690.9 579.8 L690.7 599.3 L691.0 600.0 M696.4 100.0 L696.5 129.7 L696.8 150.0 L696.0 170.5 L696.7 190.9 L696.0 210.2 L696.5 227.8 L698.1 246.3 L698.3 269.2 L696.5 289.6 L696.3 309.1 L696.5 328.9 L696.0 348.7 L696.6 365.9 L696.0 384.9 L696.4 404.9 L696.2 424.2 L696.1 443.9 L696.4 463.9 L696.4 483.5 L696.3 502.9 L696.3 522.3 L696.4 542.7 L696.1 561.9 L696.1 581.4 L696.5 600.9 L696.4 600.0 M701.8 100.0 L701.8 131.5 L701.8 151.5 L701.8 171.2 L701.8 191.0 L701.8 211.0 L701.8 231.0 L701.8 251.0 L701.8 270.9 L701.8 290.8 L701.8 310.7 L701.8 330.5 L701.8 350.3 L701.8 367.5 L701.8 386.5 L701.8 406.5 L701.8 425.8 L701.8 445.5 L701.8 465.5 L701.8 485.1 L701.8 504.5 L701.8 523.9 L701.8 544.3 L701.8 563.5 L701.8 583.0 L701.8 602.5 L701.8 600.0 M610.3 104.0 L615.6 105.6 L620.8 107.2 L625.9 108.9 L632.0 110.5 L637.1 112.2 L642.9 113.9 L648.2 115.5 L653.7 117.1 L658.9 118.7 L664.1 120.3 L669.0 121.8 L674.9 123.3 L680.0 124.8 L685.9 126.4 L691.1 128.0 L696.5 129.7 L701.8 131.5 M610.3 124.0 L615.7 125.6 L620.6 127.3 L626.2 129.0 L631.4 130.7 L637.2 132.4 L642.7 134.1 L648.1 135.6 L653.3 137.1 L658.7 138.5 L664.5 140.0 L669.1 141.4 L675.0 143.0 L680.7 144.6 L686.0 146.3 L691.0 148.1 L696.8 150.0 L701.8 151.5 M610.3 143.8 L616.1 145.6 L621.0 147.4 L626.9 149.1 L631.8 150.8 L637.7 152.3 L642.4 153.7 L647.6 155.0 L653.6 156.3 L658.9 157.7 L664.5 159.1 L669.5 160.7 L675.1 162.5 L680.8 164.4 L685.8 166.4 L691.1 168.5 L696.0 170.5 L701.8 171.2 M610.3 163.6 L615.6 166.1 L621.0 167.7 L626.4 169.2 L631.5 170.5 L637.2 171.6 L642.3 172.7 L647.5 173.9 L653.7 175.3 L659.2 176.8 L664.3 178.7 L669.0 180.7 L674.8 183.0 L680.7 185.2 L686.1 187.3 L690.6 189.3 L696.7 190.9 L701.8 191.0 M610.3 183.6 L615.6 186.2 L621.3 187.2 L626.9 187.9 L631.7 188.8 L637.4 190.0 L642.9 191.5 L647.5 193.1 L653.4 195.1 L658.5 197.3 L664.6 199.7 L669.8 202.1 L675.2 204.4 L680.3 206.4 L685.6 208.0 L691.5 209.2 L696.0 210.2 L701.8 211.0 M610.3 203.6 L615.0 204.3 L620.2 203.8 L626.3 203.5 L633.5 205.2 L638.9 208.2 L642.9 211.1 L648.7 213.7 L653.6 216.3 L658.3 218.9 L663.9 221.3 L669.2 223.3 L675.1 224.7 L680.4 225.5 L686.1 226.0 L691.3 226.7 L696.5 227.8 L701.8 231.0 M610.3 223.6 L613.1 223.4 L617.5 224.7 L624.3 231.7 L635.8 229.8 L639.2 231.2 L643.3 233.3 L648.5 235.7 L653.3 238.1 L658.5 240.1 L663.6 241.7 L668.6 242.7 L673.2 242.7 L678.4 241.7 L685.2 240.6 L693.1 243.1 L698.1 246.3 L701.8 251.0 M610.3 243.4 L614.7 244.1 L620.1 247.2 L626.5 250.0 L632.3 251.6 L637.4 253.1 L642.9 254.8 L648.5 256.7 L653.4 258.3 L658.9 259.6 L663.8 260.6 L668.1 261.5 L673.2 262.9 L677.6 265.6 L685.2 269.9 L693.7 269.1 L698.3 269.2 L701.8 270.9 M610.3 263.4 L615.7 264.2 L621.2 266.6 L626.7 269.0 L632.3 271.1 L637.7 273.0 L643.0 274.6 L647.5 275.9 L653.5 277.1 L658.4 278.1 L663.8 279.2 L669.3 280.6 L674.6 282.4 L680.2 284.7 L685.7 286.7 L691.4 288.2 L696.5 289.6 L701.8 290.8 M610.3 283.2 L616.0 285.1 L621.0 287.2 L626.2 289.1 L631.5 290.8 L637.5 292.2 L642.7 293.5 L648.1 294.7 L652.9 295.9 L658.4 297.2 L663.8 298.7 L669.4 301.1 L674.5 302.7 L680.1 304.4 L685.4 306.0 L691.0 307.6 L696.3 309.1 L701.8 310.7 M610.3 303.1 L615.3 304.7 L620.8 306.3 L626.0 307.9 L631.7 309.5 L637.0 311.1 L642.4 312.7 L648.0 314.4 L653.5 316.0 L659.1 317.6 L664.0 319.2 L669.6 320.8 L674.8 322.4 L679.9 324.0 L685.9 325.7 L691.2 327.3 L696.5 328.9 L701.8 330.5 M610.3 322.9 L615.5 324.5 L621.6 326.1 L626.3 327.7 L632.2 329.3 L636.9 330.9 L643.0 332.5 L648.2 334.2 L653.9 335.8 L658.9 337.4 L664.2 339.0 L669.7 340.6 L675.0 342.2 L680.2 343.8 L685.8 345.5 L690.6 347.1 L696.0 348.7 L701.8 350.3 M610.3 340.1 L615.3 341.7 L621.6 343.3 L626.9 344.9 L632.0 346.5 L637.5 348.1 L642.3 349.7 L647.8 351.4 L653.7 353.0 L658.7 354.6 L664.1 356.2 L669.8 357.8 L675.3 359.4 L680.3 361.0 L685.7 362.7 L691.1 364.3 L696.6 365.9 L701.8 367.5 M610.3 359.1 L616.0 360.7 L621.4 362.3 L626.7 363.9 L631.4 365.5 L637.7 367.1 L642.1 368.7 L648.5 370.4 L653.6 372.0 L659.1 373.6 L663.9 375.2 L670.0 376.8 L674.8 378.4 L680.5 380.0 L686.0 381.7 L690.9 383.3 L696.0 384.9 L701.8 386.5 M610.3 379.1 L615.9 380.7 L621.3 382.3 L626.1 383.9 L632.3 385.5 L636.9 387.1 L642.4 388.7 L647.6 390.4 L653.2 392.0 L658.6 393.6 L664.5 395.2 L669.7 396.8 L675.0 398.4 L680.3 400.0 L685.7 401.7 L691.5 403.3 L696.4 404.9 L701.8 406.5 M610.3 398.4 L615.2 400.0 L620.9 401.6 L626.2 403.2 L631.5 404.8 L637.7 406.4 L642.5 408.0 L648.0 409.7 L653.6 411.3 L658.9 412.9 L664.6 414.5 L669.2 416.1 L675.3 417.7 L679.8 419.3 L685.5 421.0 L691.5 422.6 L696.2 424.2 L701.8 425.8 M610.3 418.1 L616.2 419.7 L620.8 421.3 L626.0 422.9 L631.6 424.5 L637.6 426.1 L642.2 427.7 L648.2 429.4 L653.4 431.0 L658.4 432.6 L664.1 434.2 L669.5 435.8 L675.2 437.4 L680.6 439.0 L685.5 440.7 L690.8 442.3 L696.1 443.9 L701.8 445.5 M610.3 438.1 L616.1 439.7 L620.9 441.3 L626.0 442.9 L632.1 444.5 L637.3 446.1 L642.3 447.7 L648.4 449.4 L653.3 451.0 L658.7 452.6 L663.7 454.2 L669.2 455.8 L675.3 457.4 L679.8 459.0 L686.0 460.7 L691.0 462.3 L696.4 463.9 L701.8 465.5 M610.3 457.7 L615.8 459.3 L620.6 460.9 L626.7 462.5 L631.7 464.1 L637.1 465.7 L642.5 467.3 L648.2 469.0 L653.7 470.6 L659.0 472.2 L663.7 473.8 L669.0 475.4 L674.9 477.0 L680.6 478.6 L686.1 480.3 L690.7 481.9 L696.4 483.5 L701.8 485.1 M610.3 477.1 L615.8 478.7 L621.3 480.3 L626.1 481.9 L631.6 483.5 L636.8 485.1 L642.7 486.7 L648.2 488.4 L652.9 490.0 L659.2 491.6 L664.5 493.2 L669.5 494.8 L675.0 496.4 L679.9 498.0 L685.4 499.7 L691.0 501.3 L696.3 502.9 L701.8 504.5 M610.3 496.4 L615.3 498.1 L621.0 499.7 L626.5 501.3 L631.4 502.9 L636.8 504.5 L642.2 506.1 L648.3 507.8 L653.6 509.4 L659.1 511.0 L663.7 512.6 L669.7 514.2 L674.6 515.8 L680.1 517.4 L686.0 519.1 L691.4 520.7 L696.3 522.3 L701.8 523.9 M610.3 516.8 L615.2 518.5 L621.4 520.1 L626.4 521.7 L631.4 523.3 L637.7 524.9 L642.5 526.5 L648.4 528.2 L652.9 529.8 L658.6 531.4 L664.3 533.0 L669.2 534.6 L675.1 536.2 L680.6 537.8 L686.1 539.5 L691.4 541.1 L696.4 542.7 L701.8 544.3 M610.3 536.0 L615.7 537.7 L621.0 539.3 L626.1 540.9 L631.9 542.5 L637.0 544.1 L643.0 545.7 L647.8 547.4 L653.5 549.0 L658.8 550.6 L664.2 552.2 L669.3 553.8 L675.2 555.4 L679.9 557.0 L685.7 558.7 L691.0 560.3 L696.1 561.9 L701.8 563.5 M610.3 555.5 L615.2 557.2 L621.5 558.8 L626.7 560.4 L631.6 562.0 L637.4 563.6 L643.1 565.2 L648.2 566.9 L653.3 568.5 L658.6 570.1 L663.9 571.7 L669.4 573.3 L675.0 574.9 L679.9 576.5 L685.7 578.2 L690.9 579.8 L696.1 581.4 L701.8 583.0 M610.3 575.0 L615.4 576.7 L621.4 578.3 L626.1 579.9 L631.9 581.5 L637.0 583.1 L642.8 584.7 L648.4 586.4 L653.1 588.0 L658.4 589.6 L664.4 591.2 L669.7 592.8 L675.1 594.4 L680.3 596.0 L685.4 597.7 L690.7 599.3 L696.5 600.9 L701.8 602.5 M626.8 194.8 Q648.8 226.8 626.8 258.8 Q604.8 226.8 626.8 194.8 M685.8 226.2 Q707.8 258.2 685.8 290.2 Q663.8 258.2 685.8 226.2" stroke="#2c2c2c" stroke-width="1.05" fill="none"/><ellipse cx="626.8" cy="226.8" rx="5.2" ry="17" fill="url(#hole)" stroke="#2c2c2c" stroke-width="1"/><ellipse cx="685.8" cy="258.2" rx="5.2" ry="17" fill="url(#hole)" stroke="#2c2c2c" stroke-width="1"/><polygon points="701.8,100.0 718.0,100.0 718.0,600.0 701.8,600.0" fill="#a7a7a7" stroke="none" stroke-width="0"/><path d="M701.8 131.5 L718.0 130.0 M701.8 151.5 L718.0 150.0 M701.8 171.2 L718.0 169.7 M701.8 191.0 L718.0 189.5 M701.8 211.0 L718.0 209.5 M701.8 231.0 L718.0 229.5 M701.8 251.0 L718.0 249.5 M701.8 270.9 L718.0 269.4 M701.8 290.8 L718.0 289.3 M701.8 310.7 L718.0 309.2 M701.8 330.5 L718.0 329.0 M701.8 350.3 L718.0 348.8 M701.8 367.5 L718.0 366.0 M701.8 386.5 L718.0 385.0 M701.8 406.5 L718.0 405.0 M701.8 425.8 L718.0 424.3 M701.8 445.5 L718.0 444.0 M701.8 465.5 L718.0 464.0 M701.8 485.1 L718.0 483.6 M701.8 504.5 L718.0 503.0 M701.8 523.9 L718.0 522.4 M701.8 544.3 L718.0 542.8 M701.8 563.5 L718.0 562.0 M701.8 583.0 L718.0 581.5 M701.8 602.5 L718.0 601.0" stroke="#2c2c2c" stroke-width="1.05" fill="none"/><path d="M701.8 100 V600 M718 100 V600" stroke="#262626" stroke-width="1.4" fill="none"/><polygon points="718.0,100.0 904.6,100.0 904.6,600.0 718.0,600.0" fill="#a7a7a7" stroke="none" stroke-width="0"/><path d="M737.0 100.0 L737.0 129.1 L737.0 149.1 L737.0 168.8 L737.0 188.6 L737.0 208.6 L737.0 228.6 L737.0 248.6 L737.0 268.5 L737.0 288.4 L737.0 308.3 L737.0 328.1 L737.0 347.9 L737.0 365.1 L736.9 383.8 L737.1 403.7 L737.0 423.3 L736.6 443.2 L736.6 463.1 L736.7 482.3 L736.9 502.5 L736.7 521.3 L737.1 542.4 L737.1 561.0 L737.4 580.2 L737.3 599.9 L737.0 600.0 M755.2 100.0 L755.2 128.3 L755.2 148.3 L755.2 168.0 L755.2 187.8 L755.2 207.8 L755.2 227.8 L755.2 247.8 L755.2 267.7 L755.2 287.6 L755.2 307.5 L755.2 327.3 L755.2 347.1 L755.2 364.3 L754.9 382.9 L755.0 403.6 L754.9 422.7 L755.3 442.2 L755.2 461.9 L754.8 481.6 L755.3 501.3 L755.1 520.8 L755.2 540.9 L755.4 560.5 L755.0 579.9 L755.2 599.7 L755.2 600.0 M773.5 100.0 L773.5 127.5 L773.5 147.5 L773.5 167.2 L773.5 187.0 L773.5 207.0 L773.5 227.0 L773.5 247.0 L773.5 266.9 L773.5 286.8 L773.5 306.7 L773.5 326.5 L773.5 346.3 L773.5 363.5 L773.7 382.3 L773.9 402.1 L773.4 422.1 L773.2 441.5 L773.1 461.7 L773.7 481.2 L773.8 500.3 L773.7 520.0 L773.6 540.3 L771.0 559.7 L775.0 580.0 L773.1 598.7 L773.5 600.0 M792.0 100.0 L792.0 126.7 L792.0 146.7 L792.0 166.4 L792.0 186.2 L792.0 206.2 L792.0 226.2 L792.0 246.2 L792.0 266.1 L792.0 286.0 L792.0 305.9 L792.0 325.7 L792.0 345.5 L792.0 362.7 L792.1 382.2 L792.3 401.5 L791.9 421.1 L791.6 440.6 L791.7 460.3 L791.6 480.5 L791.7 499.4 L791.9 519.4 L794.5 544.8 L786.0 559.7 L791.7 576.5 L791.8 597.6 L792.0 600.0 M812.0 100.0 L812.0 125.8 L812.0 145.8 L812.0 165.5 L812.0 185.3 L812.0 205.3 L812.0 225.3 L812.0 245.3 L812.0 265.2 L812.0 285.1 L812.0 305.0 L812.0 324.8 L812.0 344.6 L812.0 361.8 L811.9 381.2 L812.4 400.4 L811.7 419.8 L811.8 439.8 L812.1 459.5 L811.6 479.3 L811.9 498.8 L812.4 518.4 L814.0 537.3 L817.9 554.0 L816.0 568.0 L812.3 597.1 L812.0 600.0 M831.2 100.0 L831.2 124.9 L831.2 144.9 L831.2 164.6 L831.2 184.4 L831.2 204.4 L831.2 224.4 L831.2 244.4 L831.2 264.3 L831.2 284.2 L831.2 304.1 L831.2 323.9 L831.2 343.7 L831.2 360.9 L831.1 379.8 L830.9 400.0 L830.8 418.8 L831.0 438.6 L831.1 458.5 L830.8 478.2 L830.9 497.8 L830.8 517.7 L831.3 537.4 L831.0 556.8 L846.0 578.0 L831.5 596.4 L831.2 600.0 M849.6 100.0 L849.6 124.1 L849.6 144.1 L849.6 163.8 L849.6 183.6 L849.6 203.6 L849.6 223.6 L849.6 243.6 L849.6 263.5 L849.6 283.4 L849.6 303.3 L849.6 323.1 L849.6 342.9 L849.6 360.1 L849.6 379.1 L849.3 398.7 L849.5 418.1 L849.9 437.7 L849.2 458.5 L849.6 477.3 L849.6 496.6 L849.6 517.0 L849.9 537.1 L849.4 555.9 L849.3 575.8 L849.6 595.4 L849.6 600.0 M868.0 100.0 L868.0 123.2 L868.0 143.2 L868.0 162.9 L868.0 182.8 L868.0 202.8 L868.0 222.8 L868.0 242.8 L868.0 262.6 L868.0 282.6 L868.0 302.4 L868.0 322.2 L868.0 342.1 L868.0 359.2 L867.9 378.0 L868.2 398.7 L868.3 417.9 L868.3 437.5 L867.8 457.3 L867.9 476.4 L867.6 496.0 L867.8 515.8 L868.4 536.0 L868.3 555.7 L868.4 574.6 L867.8 594.0 L868.0 600.0 M886.2 100.0 L886.2 122.4 L886.2 142.4 L886.2 162.1 L886.2 181.9 L886.2 201.9 L886.2 221.9 L886.2 241.9 L886.2 261.8 L886.2 281.7 L886.2 301.6 L886.2 321.4 L886.2 341.2 L886.2 358.4 L886.0 377.1 L886.3 397.8 L886.5 416.7 L886.3 436.7 L885.9 456.6 L886.5 476.3 L886.4 495.4 L885.9 515.1 L886.1 535.5 L886.6 554.3 L886.1 574.4 L886.4 593.1 L886.2 600.0 M718.0 130.0 L737.0 129.1 L755.2 128.3 L773.5 127.5 L792.0 126.7 L812.0 125.8 L831.2 124.9 L849.6 124.1 L868.0 123.2 L886.2 122.4 L904.6 121.6 M718.0 150.0 L737.0 149.1 L755.2 148.3 L773.5 147.5 L792.0 146.7 L812.0 145.8 L831.2 144.9 L849.6 144.1 L868.0 143.2 L886.2 142.4 L904.6 141.6 M718.0 169.7 L737.0 168.8 L755.2 168.0 L773.5 167.2 L792.0 166.4 L812.0 165.5 L831.2 164.6 L849.6 163.8 L868.0 162.9 L886.2 162.1 L904.6 161.3 M718.0 189.5 L737.0 188.6 L755.2 187.8 L773.5 187.0 L792.0 186.2 L812.0 185.3 L831.2 184.4 L849.6 183.6 L868.0 182.8 L886.2 181.9 L904.6 181.1 M718.0 209.5 L737.0 208.6 L755.2 207.8 L773.5 207.0 L792.0 206.2 L812.0 205.3 L831.2 204.4 L849.6 203.6 L868.0 202.8 L886.2 201.9 L904.6 201.1 M718.0 229.5 L737.0 228.6 L755.2 227.8 L773.5 227.0 L792.0 226.2 L812.0 225.3 L831.2 224.4 L849.6 223.6 L868.0 222.8 L886.2 221.9 L904.6 221.1 M718.0 249.5 L737.0 248.6 L755.2 247.8 L773.5 247.0 L792.0 246.2 L812.0 245.3 L831.2 244.4 L849.6 243.6 L868.0 242.8 L886.2 241.9 L904.6 241.1 M718.0 269.4 L737.0 268.5 L755.2 267.7 L773.5 266.9 L792.0 266.1 L812.0 265.2 L831.2 264.3 L849.6 263.5 L868.0 262.6 L886.2 261.8 L904.6 261.0 M718.0 289.3 L737.0 288.4 L755.2 287.6 L773.5 286.8 L792.0 286.0 L812.0 285.1 L831.2 284.2 L849.6 283.4 L868.0 282.6 L886.2 281.7 L904.6 280.9 M718.0 309.2 L737.0 308.3 L755.2 307.5 L773.5 306.7 L792.0 305.9 L812.0 305.0 L831.2 304.1 L849.6 303.3 L868.0 302.4 L886.2 301.6 L904.6 300.8 M718.0 329.0 L737.0 328.1 L755.2 327.3 L773.5 326.5 L792.0 325.7 L812.0 324.8 L831.2 323.9 L849.6 323.1 L868.0 322.2 L886.2 321.4 L904.6 320.6 M718.0 348.8 L737.0 347.9 L755.2 347.1 L773.5 346.3 L792.0 345.5 L812.0 344.6 L831.2 343.7 L849.6 342.9 L868.0 342.1 L886.2 341.2 L904.6 340.4 M718.0 366.0 L737.0 365.1 L755.2 364.3 L773.5 363.5 L792.0 362.7 L812.0 361.8 L831.2 360.9 L849.6 360.1 L868.0 359.2 L886.2 358.4 L904.6 357.6 M718.0 385.0 L736.9 383.8 L754.9 382.9 L773.7 382.3 L792.1 382.2 L811.9 381.2 L831.1 379.8 L849.6 379.1 L867.9 378.0 L886.0 377.1 L904.6 376.6 M718.0 405.0 L737.1 403.7 L755.0 403.6 L773.9 402.1 L792.3 401.5 L812.4 400.4 L830.9 400.0 L849.3 398.7 L868.2 398.7 L886.3 397.8 L904.6 396.6 M718.0 424.3 L737.0 423.3 L754.9 422.7 L773.4 422.1 L791.9 421.1 L811.7 419.8 L830.8 418.8 L849.5 418.1 L868.3 417.9 L886.5 416.7 L904.6 415.9 M718.0 444.0 L736.6 443.2 L755.3 442.2 L773.2 441.5 L791.6 440.6 L811.8 439.8 L831.0 438.6 L849.9 437.7 L868.3 437.5 L886.3 436.7 L904.6 435.6 M718.0 464.0 L736.6 463.1 L755.2 461.9 L773.1 461.7 L791.7 460.3 L812.1 459.5 L831.1 458.5 L849.2 458.5 L867.8 457.3 L885.9 456.6 L904.6 455.6 M718.0 483.6 L736.7 482.3 L754.8 481.6 L773.7 481.2 L791.6 480.5 L811.6 479.3 L830.8 478.2 L849.6 477.3 L867.9 476.4 L886.5 476.3 L904.6 475.2 M718.0 503.0 L736.9 502.5 L755.3 501.3 L773.8 500.3 L791.7 499.4 L811.9 498.8 L830.9 497.8 L849.6 496.6 L867.6 496.0 L886.4 495.4 L904.6 494.6 M718.0 522.4 L736.7 521.3 L755.1 520.8 L773.7 520.0 L791.9 519.4 L812.4 518.4 L830.8 517.7 L849.6 517.0 L867.8 515.8 L885.9 515.1 L904.6 514.0 M718.0 542.8 L737.1 542.4 L755.2 540.9 L773.6 540.3 L794.5 544.8 L814.0 537.3 L831.3 537.4 L849.9 537.1 L868.4 536.0 L886.1 535.5 L904.6 534.4 M718.0 562.0 L737.1 561.0 L755.4 560.5 L771.0 559.7 L786.0 559.7 M803.8 560.7 L817.9 554.0 L831.0 556.8 L849.4 555.9 L868.3 555.7 L886.6 554.3 L904.6 553.6 M718.0 581.5 L737.4 580.2 L755.0 579.9 L775.0 580.0 L791.7 576.5 L816.0 568.0 L846.0 578.0 L849.3 575.8 L868.4 574.6 L886.1 574.4 L904.6 573.1 M718.0 601.0 L737.3 599.9 L755.2 599.7 L773.1 598.7 L791.8 597.6 L812.3 597.1 L831.5 596.4 L849.6 595.4 L867.8 594.0 L886.4 593.1 L904.6 592.6 M794.5 544.8 L803.8 560.7 L817.9 554.0 M803.8 560.7 L791.7 576.5" stroke="#2c2c2c" stroke-width="1.05" fill="none"/><polygon points="904.6,100.0 940.0,100.0 940.0,600.0 904.6,600.0" fill="url(#fil)" stroke="none" stroke-width="0"/><path d="M926.4 100.0 L926.4 600.0 M904.6 121.6 L915.0 121.9 L926.4 122.8 L934.0 124.6 L940.0 127.6 M904.6 141.6 L915.0 141.9 L926.4 142.8 L934.0 144.6 L940.0 147.6 M904.6 161.3 L915.0 161.6 L926.4 162.5 L934.0 164.3 L940.0 167.3 M904.6 181.1 L915.0 181.4 L926.4 182.3 L934.0 184.1 L940.0 187.1 M904.6 201.1 L915.0 201.4 L926.4 202.3 L934.0 204.1 L940.0 207.1 M904.6 221.1 L915.0 221.4 L926.4 222.3 L934.0 224.1 L940.0 227.1 M904.6 241.1 L915.0 241.4 L926.4 242.3 L934.0 244.1 L940.0 247.1 M904.6 261.0 L915.0 261.3 L926.4 262.2 L934.0 264.0 L940.0 267.0 M904.6 280.9 L915.0 281.2 L926.4 282.1 L934.0 283.9 L940.0 286.9 M904.6 300.8 L915.0 301.1 L926.4 302.0 L934.0 303.8 L940.0 306.8 M904.6 320.6 L915.0 320.9 L926.4 321.8 L934.0 323.6 L940.0 326.6 M904.6 340.4 L915.0 340.7 L926.4 341.6 L934.0 343.4 L940.0 346.4 M904.6 357.6 L915.0 357.9 L926.4 358.8 L934.0 360.6 L940.0 363.6 M904.6 376.6 L915.0 376.9 L926.4 377.8 L934.0 379.6 L940.0 382.6 M904.6 396.6 L915.0 396.9 L926.4 397.8 L934.0 399.6 L940.0 402.6 M904.6 415.9 L915.0 416.2 L926.4 417.1 L934.0 418.9 L940.0 421.9 M904.6 435.6 L915.0 435.9 L926.4 436.8 L934.0 438.6 L940.0 441.6 M904.6 455.6 L915.0 455.9 L926.4 456.8 L934.0 458.6 L940.0 461.6 M904.6 475.2 L915.0 475.5 L926.4 476.4 L934.0 478.2 L940.0 481.2 M904.6 494.6 L915.0 494.9 L926.4 495.8 L934.0 497.6 L940.0 500.6 M904.6 514.0 L915.0 514.3 L926.4 515.2 L934.0 517.0 L940.0 520.0 M904.6 534.4 L915.0 534.7 L926.4 535.6 L934.0 537.4 L940.0 540.4 M904.6 553.6 L915.0 553.9 L926.4 554.8 L934.0 556.6 L940.0 559.6 M904.6 573.1 L915.0 573.4 L926.4 574.3 L934.0 576.1 L940.0 579.1 M904.6 592.6 L915.0 592.9 L926.4 593.8 L934.0 595.6 L940.0 598.6" stroke="#2c2c2c" stroke-width="1.05" fill="none"/><path d="M904.6 100 V600" stroke="#2c2c2c" stroke-width="1.1" fill="none"/><polygon points="940.0,100.0 975.8,100.0 975.8,600.0 940.0,600.0" fill="#a4a4a4" stroke="none" stroke-width="0"/><path d="M940.0 130.0 L940.0 140.0 L940.0 150.0 L940.0 160.0 L940.0 170.0 L940.0 180.0 L940.0 190.0 L940.0 200.0 L940.0 210.0 L940.0 220.0 L940.0 230.0 L940.0 240.0 L940.0 250.0 L940.0 260.0 L940.0 270.0 L940.0 280.0 L940.0 290.0 L940.0 300.0 L940.0 310.0 L940.0 320.0 L940.0 330.0 L940.0 340.0 L940.0 350.0 L940.0 360.0 L940.0 370.0 L940.0 380.0 L940.0 390.0 L940.0 400.0 L940.0 410.0 L940.0 420.0 L940.0 430.0 L940.0 440.0 L940.0 450.0 L940.0 460.0 L940.0 470.0 L940.0 480.0 L940.0 490.0 L940.0 500.0 L940.0 510.0 L940.0 520.0 L940.0 530.0 L940.0 540.0 L940.0 550.0 L940.0 560.0 L940.0 570.0 L940.0 580.0 L940.0 590.0 L940.0 600.0 M946.0 130.0 L946.0 140.0 L946.0 150.0 L946.0 160.0 L946.0 170.0 L946.0 180.0 L946.0 190.0 L945.9 200.0 L945.9 210.0 L945.6 220.0 L945.3 230.0 L944.9 240.0 L944.9 250.0 L945.2 260.0 L945.6 270.0 L945.8 280.0 L945.9 290.0 L946.0 300.0 L946.0 310.0 L946.0 320.0 L946.0 330.0 L946.0 340.0 L946.0 350.0 L946.0 360.0 L946.0 370.0 L946.0 380.0 L946.0 390.0 L946.0 400.0 L946.0 410.0 L946.0 420.0 L946.0 430.0 L946.0 440.0 L946.0 450.0 L946.0 460.0 L946.0 470.0 L946.0 480.0 L946.0 490.0 L946.0 500.0 L946.0 510.0 L946.0 520.0 L946.0 530.0 L946.0 540.0 L946.0 550.0 L946.0 560.0 L946.0 570.0 L946.0 580.0 L946.0 590.0 L946.0 600.0 M951.9 130.0 L951.9 140.0 L951.9 150.0 L951.9 160.0 L951.9 170.0 L951.9 180.0 L951.9 190.0 L951.9 200.0 L951.8 210.0 L951.4 220.0 L950.6 230.0 L949.5 240.0 L949.5 250.0 L950.5 260.0 L951.3 270.0 L951.7 280.0 L951.9 290.0 L951.9 300.0 L951.9 310.0 L951.9 320.0 L951.9 330.0 L951.9 340.0 L951.9 350.0 L951.9 360.0 L951.9 370.0 L951.9 380.0 L951.9 390.0 L951.9 400.0 L951.9 410.0 L951.9 420.0 L951.9 430.0 L951.9 440.0 L951.9 450.0 L951.9 460.0 L951.9 470.0 L951.9 480.0 L951.9 490.0 L951.9 500.0 L951.9 510.0 L951.9 520.0 L951.9 530.0 L951.9 540.0 L951.9 550.0 L951.9 560.0 L951.9 570.0 L951.9 580.0 L951.9 590.0 L951.9 600.0 M957.9 130.0 L957.9 140.0 L957.9 150.0 L957.9 160.0 L957.9 170.0 L957.9 180.0 L957.9 190.0 L957.9 200.0 L957.8 210.0 L957.6 220.0 L957.1 230.0 L955.5 240.0 L955.2 250.0 L957.1 260.0 L957.6 270.0 L957.8 280.0 L957.9 290.0 L957.9 300.0 L957.9 310.0 L957.9 320.0 L957.9 330.0 L957.9 340.0 L957.9 350.0 L957.9 360.0 L957.9 370.0 L957.9 380.0 L957.9 390.0 L957.9 400.0 L957.9 410.0 L957.9 420.0 L957.9 430.0 L957.9 440.0 L957.9 450.0 L957.9 460.0 L957.9 470.0 L957.9 480.0 L957.9 490.0 L957.9 500.0 L957.9 510.0 L957.9 520.0 L957.9 530.0 L957.9 540.0 L957.9 550.0 L957.9 560.0 L957.9 570.0 L957.9 580.0 L957.9 590.0 L957.9 600.0 M963.9 130.0 L963.9 140.0 L963.9 150.0 L963.9 160.0 L963.9 170.0 L963.9 180.0 L963.9 190.0 L963.9 200.0 L964.0 210.0 L964.2 220.0 L965.0 230.0 L966.7 240.0 L966.9 250.0 L965.1 260.0 L964.3 270.0 L964.0 280.0 L963.9 290.0 L963.9 300.0 L963.9 310.0 L963.9 320.0 L963.9 330.0 L963.9 340.0 L963.9 350.0 L963.9 360.0 L963.9 370.0 L963.9 380.0 L963.9 390.0 L963.9 400.0 L963.9 410.0 L963.9 420.0 L963.9 430.0 L963.9 440.0 L963.9 450.0 L963.9 460.0 L963.9 470.0 L963.9 480.0 L963.9 490.0 L963.9 500.0 L963.9 510.0 L963.9 520.0 L963.9 530.0 L963.9 540.0 L963.9 550.0 L963.9 560.0 L963.9 570.0 L963.9 580.0 L963.9 590.0 L963.9 600.0 M969.8 130.0 L969.8 140.0 L969.8 150.0 L969.8 160.0 L969.8 170.0 L969.8 180.0 L969.8 190.0 L969.9 200.0 L970.0 210.0 L970.3 220.0 L971.1 230.0 L971.9 240.0 L972.0 250.0 L971.1 260.0 L970.4 270.0 L970.0 280.0 L969.9 290.0 L969.8 300.0 L969.8 310.0 L969.8 320.0 L969.8 330.0 L969.8 340.0 L969.8 350.0 L969.8 360.0 L969.8 370.0 L969.8 380.0 L969.8 390.0 L969.8 400.0 L969.8 410.0 L969.8 420.0 L969.8 430.0 L969.8 440.0 L969.8 450.0 L969.8 460.0 L969.8 470.0 L969.8 480.0 L969.8 490.0 L969.8 500.0 L969.8 510.0 L969.8 520.0 L969.8 530.0 L969.8 540.0 L969.8 550.0 L969.8 560.0 L969.8 570.0 L969.8 580.0 L969.8 590.0 L969.8 600.0 M975.8 130.0 L975.8 140.0 L975.8 150.0 L975.8 160.0 L975.8 170.0 L975.8 180.0 L975.8 190.0 L975.8 200.0 L975.8 210.0 L975.8 220.0 L975.8 230.0 L975.8 240.0 L975.8 250.0 L975.8 260.0 L975.8 270.0 L975.8 280.0 L975.8 290.0 L975.8 300.0 L975.8 310.0 L975.8 320.0 L975.8 330.0 L975.8 340.0 L975.8 350.0 L975.8 360.0 L975.8 370.0 L975.8 380.0 L975.8 390.0 L975.8 400.0 L975.8 410.0 L975.8 420.0 L975.8 430.0 L975.8 440.0 L975.8 450.0 L975.8 460.0 L975.8 470.0 L975.8 480.0 L975.8 490.0 L975.8 500.0 L975.8 510.0 L975.8 520.0 L975.8 530.0 L975.8 540.0 L975.8 550.0 L975.8 560.0 L975.8 570.0 L975.8 580.0 L975.8 590.0 L975.8 600.0 M940.0 127.6 L946.0 129.5 L951.9 131.4 L957.9 133.3 L963.9 135.3 L969.8 137.2 L975.8 139.1 M940.0 147.6 L946.0 149.5 L951.9 151.4 L957.9 153.3 L963.9 155.3 L969.8 157.2 L975.8 159.1 M940.0 167.3 L946.0 169.2 L951.9 171.1 L957.9 173.0 L963.9 175.0 L969.8 176.9 L975.8 178.8 M940.0 187.1 L946.0 189.0 L951.9 190.9 L957.9 192.8 L963.9 194.7 L969.8 196.6 L975.8 198.6 M940.0 207.1 L946.0 208.8 L951.9 210.4 L957.9 211.7 L963.9 213.5 L969.8 215.9 L975.8 218.6 M940.0 227.1 L946.0 228.4 L951.9 229.0 L957.9 228.6 L963.9 230.9 L969.8 235.4 L975.8 238.6 M940.0 247.1 L946.0 249.2 L951.9 252.1 L957.9 257.4 L963.9 258.6 L969.8 258.1 L975.8 258.6 M940.0 267.0 L946.0 269.4 L951.9 272.1 L957.9 274.6 L963.9 276.1 L969.8 277.2 L975.8 278.5 M940.0 286.9 L946.0 288.9 L951.9 290.9 L957.9 292.8 L963.9 294.7 L969.8 296.5 L975.8 298.4 M940.0 306.8 L946.0 308.7 L951.9 310.6 L957.9 312.6 L963.9 314.5 L969.8 316.4 L975.8 318.3 M940.0 326.6 L946.0 328.5 L951.9 330.4 L957.9 332.4 L963.9 334.3 L969.8 336.2 L975.8 338.1 M940.0 346.4 L946.0 348.3 L951.9 350.2 L957.9 352.2 L963.9 354.1 L969.8 356.0 L975.8 357.9 M940.0 363.6 L946.0 365.5 L951.9 367.4 L957.9 369.4 L963.9 371.3 L969.8 373.2 L975.8 375.1 M940.0 382.6 L946.0 384.5 L951.9 386.4 L957.9 388.4 L963.9 390.3 L969.8 392.2 L975.8 394.1 M940.0 402.6 L946.0 404.5 L951.9 406.4 L957.9 408.4 L963.9 410.3 L969.8 412.2 L975.8 414.1 M940.0 421.9 L946.0 423.8 L951.9 425.7 L957.9 427.7 L963.9 429.6 L969.8 431.5 L975.8 433.4 M940.0 441.6 L946.0 443.5 L951.9 445.4 L957.9 447.4 L963.9 449.3 L969.8 451.2 L975.8 453.1 M940.0 461.6 L946.0 463.5 L951.9 465.4 L957.9 467.4 L963.9 469.3 L969.8 471.2 L975.8 473.1 M940.0 481.2 L946.0 483.1 L951.9 485.0 L957.9 487.0 L963.9 488.9 L969.8 490.8 L975.8 492.7 M940.0 500.6 L946.0 502.5 L951.9 504.4 L957.9 506.4 L963.9 508.3 L969.8 510.2 L975.8 512.1 M940.0 520.0 L946.0 521.9 L951.9 523.8 L957.9 525.8 L963.9 527.7 L969.8 529.6 L975.8 531.5 M940.0 540.4 L946.0 542.3 L951.9 544.2 L957.9 546.1 L963.9 548.1 L969.8 550.0 L975.8 551.9 M940.0 559.6 L946.0 561.5 L951.9 563.4 L957.9 565.4 L963.9 567.3 L969.8 569.2 L975.8 571.1 M940.0 579.1 L946.0 581.0 L951.9 582.9 L957.9 584.9 L963.9 586.8 L969.8 588.7 L975.8 590.6 M940.0 598.6 L946.0 600.5 L951.9 602.4 L957.9 604.4 L963.9 606.3 L969.8 608.2 L975.8 610.1" stroke="#2c2c2c" stroke-width="1.05" fill="none"/><path d="M960.2 219.0 Q974.2 245.5 960.2 272.0 Q946.2 245.5 960.2 219.0 M960.2 208.0 Q984.2 245.5 960.2 283.0 Q936.2 245.5 960.2 208.0" stroke="#2c2c2c" stroke-width="1.05" fill="none"/><ellipse cx="960.2" cy="245.5" rx="5" ry="17.5" fill="url(#hole)" stroke="#2c2c2c" stroke-width="1"/><path d="M940 100 V600" stroke="#262626" stroke-width="1.3" fill="none"/><polygon points="975.8,100.0 991.3,100.0 991.3,600.0 975.8,600.0" fill="#a7a7a7" stroke="none" stroke-width="0"/><path d="M975.8 139.1 L991.3 139.1 M975.8 159.1 L991.3 159.1 M975.8 178.8 L991.3 178.8 M975.8 198.6 L991.3 198.6 M975.8 218.6 L991.3 218.6 M975.8 238.6 L991.3 238.6 M975.8 258.6 L991.3 258.6 M975.8 278.5 L991.3 278.5 M975.8 298.4 L991.3 298.4 M975.8 318.3 L991.3 318.3 M975.8 338.1 L991.3 338.1 M975.8 357.9 L991.3 357.9 M975.8 375.1 L991.3 375.1 M975.8 394.1 L991.3 394.1 M975.8 414.1 L991.3 414.1 M975.8 433.4 L991.3 433.4 M975.8 453.1 L991.3 453.1 M975.8 473.1 L991.3 473.1 M975.8 492.7 L991.3 492.7 M975.8 512.1 L991.3 512.1 M975.8 531.5 L991.3 531.5 M975.8 551.9 L991.3 551.9 M975.8 571.1 L991.3 571.1 M975.8 590.6 L991.3 590.6 M975.8 610.1 L991.3 610.1" stroke="#2c2c2c" stroke-width="1.05" fill="none"/><path d="M975.8 100 V600 M991.3 100 V600" stroke="#262626" stroke-width="1.3" fill="none"/><path d="M717.8 100 V331.9 M717.8 369.5 V600" stroke="#262626" stroke-width="1.9" fill="none"/><polygon points="717.8,331.9 904.6,326.5 940.0,327.4 975.4,345.4 717.8,356.5" fill="#b0b0b0" stroke="none" stroke-width="0"/><polygon points="717.8,356.5 975.4,345.4 975.4,358.6 717.8,369.5" fill="#a7a7a7" stroke="none" stroke-width="0"/><path d="M735.5 355.7 L735.5 368.8 M753.7 355.0 L753.7 368.0 M772.0 354.2 L772.0 367.2 M790.7 353.4 L790.7 366.4 M809.0 352.6 L809.0 365.6 M827.8 351.8 L827.8 364.8 M846.2 351.0 L846.2 364.1 M864.7 350.2 L864.7 363.3 M883.3 349.4 L883.3 362.5 M901.8 348.6 L901.8 361.7 M920.3 347.8 L920.3 360.9 M938.6 347.0 L938.6 360.2 M957.8 346.2 L957.8 359.3 M722.5 331.8 L735.5 355.7 M740.7 331.2 L753.7 355.0 M759.0 330.7 L772.0 354.2 M777.7 330.2 L790.7 353.4 M796.0 329.6 L809.0 352.6 M814.8 329.1 L827.8 351.8 M833.2 328.6 L846.2 351.0 M851.7 328.0 L864.7 350.2 M870.3 327.5 L883.3 349.4 M888.8 327.0 L901.8 348.6 M907.3 326.6 L920.3 347.8 M925.6 327.0 L938.6 347.0 M945.3 330.1 L957.8 346.2 M950.6 332.8 L975.4 345.4 M718.0 336.8 L724.0 336.6 L730.0 336.4 L736.0 336.2 L742.0 336.1 L748.0 335.9 L754.0 335.7 L760.0 335.5 L766.0 335.3 L772.0 335.1 L778.0 334.9 L784.0 334.7 L790.0 334.5 L796.0 334.3 L802.0 334.1 L808.0 334.0 L814.0 333.8 L820.0 333.6 L826.0 333.4 L832.0 333.2 L838.0 333.0 L844.0 332.8 L850.0 332.6 L856.0 332.4 L862.0 332.2 L868.0 332.1 L874.0 331.9 L880.0 331.7 L886.0 331.5 L892.0 331.3 L898.0 331.1 L904.0 330.9 L910.0 331.0 L916.0 331.0 L922.0 331.1 L928.0 331.2 L934.0 331.2 L940.0 331.3 L946.0 333.7 L952.0 336.1 L958.0 338.5 L964.0 340.9 L970.0 343.2 L975.4 345.4 M718.0 341.7 L724.0 341.5 L730.0 341.3 L736.0 341.1 L742.0 340.9 L748.0 340.7 L754.0 340.5 L760.0 340.3 L766.0 340.1 L772.0 339.9 L778.0 339.7 L784.0 339.5 L790.0 339.2 L796.0 339.0 L802.0 338.8 L808.0 338.6 L814.0 338.4 L820.0 338.2 L826.0 338.0 L832.0 337.8 L838.0 337.6 L844.0 337.4 L850.0 337.2 L856.0 337.0 L862.0 336.8 L868.0 336.5 L874.0 336.3 L880.0 336.1 L886.0 335.9 L892.0 335.7 L898.0 335.5 L904.0 335.3 L910.0 335.3 L916.0 335.3 L922.0 335.2 L928.0 335.2 L934.0 335.2 L940.0 335.2 L946.0 336.9 L952.0 338.7 L958.0 340.4 L964.0 342.1 L970.0 343.8 L975.4 345.4 M718.0 346.7 L724.0 346.4 L730.0 346.2 L736.0 346.0 L742.0 345.8 L748.0 345.5 L754.0 345.3 L760.0 345.1 L766.0 344.9 L772.0 344.6 L778.0 344.4 L784.0 344.2 L790.0 344.0 L796.0 343.7 L802.0 343.5 L808.0 343.3 L814.0 343.1 L820.0 342.8 L826.0 342.6 L832.0 342.4 L838.0 342.2 L844.0 341.9 L850.0 341.7 L856.0 341.5 L862.0 341.3 L868.0 341.0 L874.0 340.8 L880.0 340.6 L886.0 340.4 L892.0 340.1 L898.0 339.9 L904.0 339.7 L910.0 339.6 L916.0 339.5 L922.0 339.4 L928.0 339.3 L934.0 339.2 L940.0 339.1 L946.0 340.2 L952.0 341.2 L958.0 342.3 L964.0 343.4 L970.0 344.4 L975.4 345.4 M718.0 351.6 L724.0 351.3 L730.0 351.1 L736.0 350.8 L742.0 350.6 L748.0 350.4 L754.0 350.1 L760.0 349.9 L766.0 349.6 L772.0 349.4 L778.0 349.2 L784.0 348.9 L790.0 348.7 L796.0 348.4 L802.0 348.2 L808.0 347.9 L814.0 347.7 L820.0 347.5 L826.0 347.2 L832.0 347.0 L838.0 346.7 L844.0 346.5 L850.0 346.3 L856.0 346.0 L862.0 345.8 L868.0 345.5 L874.0 345.3 L880.0 345.1 L886.0 344.8 L892.0 344.6 L898.0 344.3 L904.0 344.1 L910.0 343.9 L916.0 343.7 L922.0 343.5 L928.0 343.4 L934.0 343.2 L940.0 343.0 L946.0 343.4 L952.0 343.8 L958.0 344.2 L964.0 344.6 L970.0 345.0 L975.4 345.4" stroke="#333" stroke-width="0.95" fill="none"/><path d="M717.8 331.9 L904.6 326.5 L940 327.4 L975.4 345.4 M717.8 356.5 L975.4 345.4 M717.8 369.5 L975.4 358.6" stroke="#2c2c2c" stroke-width="1.1" fill="none"/><polygon points="584.4,303.8 666.3,346.7 666.3,509.0 584.4,467.7" fill="#a7a7a7" stroke="none" stroke-width="0"/><path d="M584.4 303.8 L584.4 467.7 M589.9 306.7 L589.9 470.5 M595.3 309.5 L595.3 473.2 M600.8 312.4 L600.8 476.0 M606.2 315.2 L606.2 478.7 M611.7 318.1 L611.7 481.5 M617.2 321.0 L617.2 484.2 M622.6 323.8 L622.6 487.0 M628.1 326.7 L628.1 489.7 M633.5 329.5 L633.5 492.5 M639.0 332.4 L639.0 495.2 M644.5 335.3 L644.5 498.0 M649.9 338.1 L649.9 500.7 M655.4 341.0 L655.4 503.5 M660.8 343.8 L660.8 506.2 M666.3 346.7 L666.3 509.0 M584.4 303.8 L666.3 346.7 M584.4 324.3 L666.3 367.0 M584.4 344.8 L666.3 387.3 M584.4 365.3 L666.3 407.6 M584.4 385.8 L666.3 427.9 M584.4 406.2 L666.3 448.1 M584.4 426.7 L666.3 468.4 M584.4 447.2 L666.3 488.7 M584.4 467.7 L666.3 509.0" stroke="#2c2c2c" stroke-width="1.05" fill="none"/><polygon points="666.3,346.7 696.7,345.3 696.7,507.8 666.3,509.0" fill="#a7a7a7" stroke="none" stroke-width="0"/><path d="M681.5 346.0 L681.5 508.4 M666.3 346.7 L696.7 345.3 M666.3 367.0 L696.7 365.6 M666.3 387.3 L696.7 385.9 M666.3 407.6 L696.7 406.2 M666.3 427.9 L696.7 426.6 M666.3 448.1 L696.7 446.9 M666.3 468.4 L696.7 467.2 M666.3 488.7 L696.7 487.5 M666.3 509.0 L696.7 507.8" stroke="#2c2c2c" stroke-width="1.05" fill="none"/><polygon points="584.4,303.8 615.0,303.0 696.7,345.3 666.3,346.7" fill="#b4b4b4" stroke="none" stroke-width="0"/><path d="M584.4 303.8 L615.0 303.0 M589.9 306.7 L620.4 305.8 M595.3 309.5 L625.9 308.6 M600.8 312.4 L631.3 311.5 M606.2 315.2 L636.8 314.3 M611.7 318.1 L642.2 317.1 M617.2 321.0 L647.7 319.9 M622.6 323.8 L653.1 322.7 M628.1 326.7 L658.6 325.6 M633.5 329.5 L664.0 328.4 M639.0 332.4 L669.5 331.2 M644.5 335.3 L674.9 334.0 M649.9 338.1 L680.4 336.8 M655.4 341.0 L685.8 339.7 M660.8 343.8 L691.3 342.5 M666.3 346.7 L696.7 345.3 M584.4 303.8 L666.3 346.7 M599.7 303.4 L681.5 346.0 M615.0 303.0 L696.7 345.3" stroke="#2c2c2c" stroke-width="0.9" fill="none"/><path d="M666.3 346.7 V509 M696.7 345.3 V507.8" stroke="#262626" stroke-width="1.2" fill="none"/><polygon points="991.3,332.5 1017.1,331.2 1017.1,495.0 991.3,495.0" fill="#a7a7a7" stroke="none" stroke-width="0"/><polygon points="991.3,317.7 1017.1,331.2 991.3,332.5" fill="#b2b2b2" stroke="none" stroke-width="0"/><path d="M1001.6 332.0 L1001.6 495.0 M991.3 353.0 L1017.1 352.5 M991.3 372.7 L1017.1 372.2 M991.3 392.4 L1017.1 391.9 M991.3 413.0 L1017.1 412.5 M991.3 433.0 L1017.1 432.5 M991.3 453.0 L1017.1 452.5 M991.3 473.5 L1017.1 473.0 M991.3 495.0 L1017.1 494.5 M991.3 324.0 L1004.0 324.6 M991.3 328.0 L1009.5 328.5" stroke="#2c2c2c" stroke-width="1.05" fill="none"/><path d="M991.3 317.7 L1017.1 331.2 V495 H991.3" stroke="#262626" stroke-width="1.2" fill="none"/><path d="M610.3 100 V304.5 M610.3 481 V600 M584.4 303.8 V467.7" stroke="#262626" stroke-width="1.2" fill="none"/></g><defs><filter id="bl" x="-20%" y="-20%" width="140%" height="140%"><feGaussianBlur stdDeviation="0.8"/></filter></defs><circle cx="690" cy="393.5" r="16.8" fill="#f4d60a" filter="url(#bl)"/><path d="M690 393 L690 404 L692.6 401.8 L694.5 405.5 L696 404.8 L694.2 401.2 L697.5 401 Z" fill="#fff" stroke="#222" stroke-width="0.8"/></svg>
<svg style="position:absolute;left:557px;top:145px" width="12" height="12" viewBox="0 0 12 12"><path d="M4 2 H10 V10 H4 M1 6 H7 M5 4 L7 6 L5 8" stroke="#9a9a9a" stroke-width="1.1" fill="none"/></svg>
<svg style="position:absolute;left:575px;top:145px" width="12" height="12" viewBox="0 0 12 12"><path d="M2 10 L9 3" stroke="#c08a70" stroke-width="2.2"/><circle cx="9" cy="3" r="1.5" fill="#d06a50"/></svg>
<svg style="position:absolute;left:591px;top:144px" width="14" height="14" viewBox="0 0 14 14"><polygon points="7,2 13,5 7,8 1,5" fill="#f0d040"/><polygon points="1,5 7,8 7,13 1,10" fill="#2a8ad0"/><polygon points="13,5 7,8 7,13 13,10" fill="#1a6ab0"/></svg>
<svg style="position:absolute;left:610px;top:143px" width="14" height="15" viewBox="0 0 14 15"><polygon points="7,1 13,4 13,11 7,14 1,11 1,4" fill="#2a90e0"/><polygon points="7,7 13,4 13,11 7,14" fill="#1a60b0"/><polygon points="7,1 13,4 7,7 1,4" fill="#6ac0f8"/></svg>
<svg style="position:absolute;left:635px;top:144px" width="14" height="14" viewBox="0 0 14 14"><polygon points="7,1 13,4 13,10 7,13 1,10 1,4" fill="#fafafa" stroke="#bbb" stroke-width="0.6"/><polygon points="7,1 13,4 7,7 1,4" fill="#fff"/></svg>
<svg style="position:absolute;left:650px;top:147px" width="4" height="3" viewBox="0 0 4 3"><polygon points="0,0 4,0 2,3" fill="#555"/></svg>
<svg style="position:absolute;left:660px;top:143px" width="16" height="15" viewBox="0 0 16 15"><circle cx="9" cy="7" r="6" fill="#2a8ad8"/><path d="M3 7 A6 6 0 0 0 9 13 L9 7Z" fill="#f0c030"/><circle cx="5" cy="10" r="3" fill="#f0c030"/></svg>
<svg style="position:absolute;left:678px;top:147px" width="4" height="3" viewBox="0 0 4 3"><polygon points="0,0 4,0 2,3" fill="#555"/></svg>
<svg style="position:absolute;left:686px;top:143px" width="15" height="15" viewBox="0 0 15 15"><circle cx="7.5" cy="7.5" r="6.5" fill="#7aa8d8"/><circle cx="7.5" cy="7.5" r="4.8" fill="#f0e8a0"/></svg>
<svg style="position:absolute;left:701px;top:147px" width="4" height="3" viewBox="0 0 4 3"><polygon points="0,0 4,0 2,3" fill="#555"/></svg>
<svg style="position:absolute;left:712px;top:144px" width="13" height="14" viewBox="0 0 13 14"><path d="M3 2 H10 A2 2 0 0 1 12 4 V10 A2 2 0 0 1 10 12 H3" stroke="#8aa0b8" stroke-width="1.2" fill="none"/><rect x="1" y="6" width="5" height="2" fill="#8aa0b8"/></svg>
<svg style="position:absolute;left:734px;top:144px" width="13" height="14" viewBox="0 0 13 14"><path d="M2 2 V12 H11 V2" stroke="#c87070" stroke-width="1.2" fill="none"/><path d="M6 1 V9 M3 5 H9" stroke="#6a90c0" stroke-width="1.2"/></svg>
<svg style="position:absolute;left:748px;top:147px" width="4" height="3" viewBox="0 0 4 3"><polygon points="0,0 4,0 2,3" fill="#555"/></svg>
<svg style="position:absolute;left:757px;top:143px" width="15" height="15" viewBox="0 0 15 15"><circle cx="7.5" cy="7.5" r="6" fill="#3a90d0"/><path d="M3 6 L7 9 L12 4" stroke="#a8d8f8" stroke-width="1.5" fill="none"/><rect x="3" y="12" width="9" height="2" fill="#c87070"/></svg>
<svg style="position:absolute;left:773px;top:147px" width="4" height="3" viewBox="0 0 4 3"><polygon points="0,0 4,0 2,3" fill="#555"/></svg>
<svg style="position:absolute;left:784px;top:148px" width="13" height="6" viewBox="0 0 13 6"><rect x="0" y="0.5" width="12" height="4.5" rx="1" fill="#111"/></svg>
<svg style="position:absolute;left:801px;top:144px" width="12" height="14" viewBox="0 0 12 14"><rect x="1" y="1.5" width="10" height="11" fill="#b8e0f8" stroke="#6a8aa8" stroke-width="0.9"/></svg>
<div style="position:absolute;left:816px;top:144px;width:80px;height:15px;background:#fff;border:1px solid #e4e4e4;box-sizing:border-box"></div>
<svg style="position:absolute;left:819px;top:145px" width="10" height="13" viewBox="0 0 10 13"><path d="M5 1 A3.5 3.5 0 0 1 7.5 7.5 V9.5 H2.5 V7.5 A3.5 3.5 0 0 1 5 1 Z" fill="#fffbe0" stroke="#a09060" stroke-width="0.9"/><rect x="3" y="10" width="4" height="2" fill="#888"/></svg>
<svg style="position:absolute;left:831px;top:145px" width="12" height="13" viewBox="0 0 12 13"><circle cx="6" cy="6.5" r="5.3" fill="#f0d030" stroke="#b8a040" stroke-width="0.9"/></svg>
<div class="t" style="left:844px;top:148.30px;font-size:8.6px;color:#222;letter-spacing:-0.2px;font-weight:400">Layer0000</div>
<svg style="position:absolute;left:888px;top:149px" width="5" height="3" viewBox="0 0 5 3"><polygon points="0,0 5,0 2.5,3" fill="#333"/></svg>
<svg style="position:absolute;left:22px;top:160.6px" width="11" height="10" viewBox="0 0 11 10"><polygon points="5.5,0 11,3 5.5,6 0,3" fill="#f2d46a"/><polygon points="0,3 5.5,6 5.5,10 0,7" fill="#2a7ac8"/><polygon points="11,3 5.5,6 5.5,10 11,7" fill="#1a5aa0"/></svg>
<div class="t" style="left:34.3px;top:162.44px;font-size:8.5px;color:#222;font-weight:500;">接触</div>
<div style="position:absolute;left:0px;top:171.16px;width:271px;height:13.13px;background:#f6f6f6"></div>
<svg style="position:absolute;left:22px;top:173.73px" width="11" height="10" viewBox="0 0 11 10"><g stroke="#5ab0e0" stroke-width="1.2"><line x1="5.5" y1="0" x2="5.5" y2="10"/><line x1="0" y1="5" x2="11" y2="5"/><line x1="1.5" y1="1.5" x2="9.5" y2="8.5"/><line x1="9.5" y1="1.5" x2="1.5" y2="8.5"/></g><circle cx="5.5" cy="5" r="1.5" fill="#fff"/></svg>
<div class="t" style="left:34.3px;top:175.57px;font-size:8.5px;color:#222;font-weight:500;">连接</div>
<svg style="position:absolute;left:9.5px;top:189.35999999999999px" width="7" height="5" viewBox="0 0 7 5"><path d="M0.8 0.8 L3.5 3.6 L6.2 0.8" stroke="#333" stroke-width="1.3" fill="none"/></svg>
<svg style="position:absolute;left:22px;top:186.35999999999999px" width="11" height="11" viewBox="0 0 11 11"><circle cx="4" cy="3" r="2.5" fill="#2a7ac8"/><path d="M1 6 h7 l3 3 v2 h-10z" fill="#2a8ad8"/><path d="M6 5 l4 4" stroke="#f0b030" stroke-width="1.5"/></svg>
<div class="t" style="left:34.3px;top:188.70px;font-size:8.5px;color:#222;font-weight:500;">约束</div>
<div style="position:absolute;left:0px;top:197.43px;width:271px;height:13.13px;background:#f6f6f6"></div>
<svg style="position:absolute;left:31px;top:200.39000000000001px" width="10" height="10" viewBox="0 0 10 10"><rect x="0.5" y="0.5" width="8.5" height="8.5" fill="#fff" stroke="#444" stroke-width="0.9"/></svg>
<svg style="position:absolute;left:44px;top:199.49px" width="12" height="11" viewBox="0 0 12 11"><polygon points="0,6 6,3 12,6 6,9" fill="#f2c040"/><polygon points="0,6 6,9 6,11 0,8" fill="#2a7ac8"/><polygon points="12,6 6,9 6,11 12,8" fill="#1a5aa0"/><path d="M4 0 l3 4" stroke="#d04a2a" stroke-width="1.6"/></svg>
<div class="t" style="left:57px;top:201.83px;font-size:8.5px;color:#222;font-weight:500;">固定约束<span class="l"> 1</span></div>
<svg style="position:absolute;left:9.5px;top:215.62px" width="7" height="5" viewBox="0 0 7 5"><path d="M0.8 0.8 L3.5 3.6 L6.2 0.8" stroke="#333" stroke-width="1.3" fill="none"/></svg>
<svg style="position:absolute;left:22px;top:212.62px" width="11" height="11" viewBox="0 0 11 11"><circle cx="3" cy="3" r="2.2" fill="#2a7ac8"/><circle cx="8" cy="3" r="2.2" fill="#2a7ac8"/><rect x="1" y="6" width="9" height="4" fill="#3a9ae0"/><path d="M5 1 v4" stroke="#f0b030" stroke-width="1.2"/></svg>
<div class="t" style="left:34.3px;top:214.96px;font-size:8.5px;color:#222;font-weight:500;">机械载荷</div>
<div style="position:absolute;left:0px;top:223.69px;width:271px;height:13.13px;background:#f6f6f6"></div>
<svg style="position:absolute;left:31px;top:226.65px" width="10" height="10" viewBox="0 0 10 10"><rect x="0.5" y="0.5" width="8.5" height="8.5" fill="#fff" stroke="#444" stroke-width="0.9"/></svg>
<svg style="position:absolute;left:44px;top:225.75px" width="12" height="11" viewBox="0 0 12 11"><path d="M1 2 h4 v4 h6 v5 h-10z" fill="#2a8ad8"/><path d="M6 0 l4 4" stroke="#2a7ac8" stroke-width="1.6"/></svg>
<div class="t" style="left:57px;top:228.09px;font-size:8.5px;color:#222;font-weight:500;">力载荷<span class="l"> 1</span></div>
<svg style="position:absolute;left:9.5px;top:241.88px" width="7" height="5" viewBox="0 0 7 5"><path d="M0.8 0.8 L3.5 3.6 L6.2 0.8" stroke="#333" stroke-width="1.3" fill="none"/></svg>
<svg style="position:absolute;left:21px;top:239.78px" width="10" height="10" viewBox="0 0 10 10"><rect x="0.5" y="0.5" width="8.5" height="8.5" fill="#fff" stroke="#444" stroke-width="0.9"/><path d="M2 4.6 L4 7 L7.6 1.6" stroke="#d23a2a" stroke-width="1.2" fill="none"/></svg>
<svg style="position:absolute;left:35px;top:240.13px" width="10" height="8.5" viewBox="0 0 10 8.5"><polygon points="5.0,0 10,2.125 10,6.375 5.0,8.5 0,6.375 0,2.125" fill="#2a8ad8"/><polygon points="5.0,4.25 10,2.125 10,6.375 5.0,8.5" fill="#1a5aa8"/></svg>
<div class="t" style="left:47px;top:241.22px;font-size:8.5px;color:#222;font-weight:500;">网格</div>
<div style="position:absolute;left:0px;top:249.94px;width:271px;height:13.13px;background:#f6f6f6"></div>
<svg style="position:absolute;left:20.5px;top:255.01px" width="7" height="5" viewBox="0 0 7 5"><path d="M0.8 0.8 L3.5 3.6 L6.2 0.8" stroke="#333" stroke-width="1.3" fill="none"/></svg>
<svg style="position:absolute;left:31px;top:252.91px" width="10" height="10" viewBox="0 0 10 10"><rect x="0.5" y="0.5" width="8.5" height="8.5" fill="#fff" stroke="#444" stroke-width="0.9"/><path d="M2 4.6 L4 7 L7.6 1.6" stroke="#d23a2a" stroke-width="1.2" fill="none"/></svg>
<svg style="position:absolute;left:44px;top:252.01px" width="12" height="11" viewBox="0 0 12 11"><polygon points="0,3 5,0 10,3 10,8 5,11 0,8" fill="#2a8ad8"/><circle cx="9" cy="7" r="3" fill="#f2a830"/></svg>
<div class="t" style="left:57px;top:254.35px;font-size:8.5px;color:#222;font-weight:500;">非独立网格</div>
<svg style="position:absolute;left:30.5px;top:268.14px" width="7" height="5" viewBox="0 0 7 5"><path d="M0.8 0.8 L3.5 3.6 L6.2 0.8" stroke="#333" stroke-width="1.3" fill="none"/></svg>
<svg style="position:absolute;left:40px;top:265.53999999999996px" width="12" height="10.2" viewBox="0 0 12 10.2"><polygon points="6.0,0 12,2.55 12,7.6499999999999995 6.0,10.2 0,7.6499999999999995 0,2.55" fill="#2a7ac8"/><polygon points="6.0,5.1 12,2.55 12,7.6499999999999995 6.0,10.2" fill="#1a5aa0"/></svg>
<div class="t" style="left:54px;top:267.48px;font-size:8.5px;color:#222;font-weight:500;"><span class="l">S17</span></div>
<div style="position:absolute;left:0px;top:276.2px;width:271px;height:13.13px;background:#f6f6f6"></div>
<svg style="position:absolute;left:39.5px;top:281.27px" width="7" height="5" viewBox="0 0 7 5"><path d="M0.8 0.8 L3.5 3.6 L6.2 0.8" stroke="#333" stroke-width="1.3" fill="none"/></svg>
<svg style="position:absolute;left:51px;top:279.52px" width="10" height="8.5" viewBox="0 0 10 8.5"><polygon points="5.0,0 10,2.125 10,6.375 5.0,8.5 0,6.375 0,2.125" fill="#f6b030"/><polygon points="5.0,4.25 10,2.125 10,6.375 5.0,8.5" fill="#e89a20"/></svg>
<div class="t" style="left:64px;top:280.61px;font-size:8.5px;color:#333;font-weight:500;"><span class="l">3D</span></div>
<svg style="position:absolute;left:61.5px;top:292.29999999999995px" width="10" height="10" viewBox="0 0 10 10"><rect x="0.5" y="0.5" width="8.5" height="8.5" fill="#fff" stroke="#444" stroke-width="0.9"/><path d="M2 4.6 L4 7 L7.6 1.6" stroke="#d23a2a" stroke-width="1.2" fill="none"/></svg>
<svg style="position:absolute;left:74.5px;top:293.4px" width="11" height="7" viewBox="0 0 11 7"><ellipse cx="5.5" cy="1.8" rx="5" ry="1.7" fill="#3aa0e0"/><rect x="0.5" y="1.8" width="10" height="4" fill="#1f78c0"/><ellipse cx="5.5" cy="5.8" rx="5" ry="1.5" fill="#1f78c0"/></svg>
<div class="t" style="left:87.5px;top:293.74px;font-size:8.5px;color:#222;font-weight:500;"><span class="l">S17</span></div>
<div style="position:absolute;left:0px;top:302.46px;width:271px;height:13.13px;background:#f6f6f6"></div>
<svg style="position:absolute;left:30.5px;top:307.53px" width="7" height="5" viewBox="0 0 7 5"><path d="M0.8 0.8 L3.5 3.6 L6.2 0.8" stroke="#333" stroke-width="1.3" fill="none"/></svg>
<svg style="position:absolute;left:40px;top:304.92999999999995px" width="12" height="10.2" viewBox="0 0 12 10.2"><polygon points="6.0,0 12,2.55 12,7.6499999999999995 6.0,10.2 0,7.6499999999999995 0,2.55" fill="#2a7ac8"/><polygon points="6.0,5.1 12,2.55 12,7.6499999999999995 6.0,10.2" fill="#1a5aa0"/></svg>
<div class="t" style="left:54px;top:306.87px;font-size:8.5px;color:#222;font-weight:500;"><span class="l">S1</span></div>
<svg style="position:absolute;left:39.5px;top:320.65999999999997px" width="7" height="5" viewBox="0 0 7 5"><path d="M0.8 0.8 L3.5 3.6 L6.2 0.8" stroke="#333" stroke-width="1.3" fill="none"/></svg>
<svg style="position:absolute;left:51px;top:318.90999999999997px" width="10" height="8.5" viewBox="0 0 10 8.5"><polygon points="5.0,0 10,2.125 10,6.375 5.0,8.5 0,6.375 0,2.125" fill="#f6b030"/><polygon points="5.0,4.25 10,2.125 10,6.375 5.0,8.5" fill="#e89a20"/></svg>
<div class="t" style="left:64px;top:320.00px;font-size:8.5px;color:#333;font-weight:500;"><span class="l">3D</span></div>
<div style="position:absolute;left:0px;top:328.72px;width:271px;height:13.13px;background:#f6f6f6"></div>
<svg style="position:absolute;left:61.5px;top:331.68999999999994px" width="10" height="10" viewBox="0 0 10 10"><rect x="0.5" y="0.5" width="8.5" height="8.5" fill="#fff" stroke="#444" stroke-width="0.9"/><path d="M2 4.6 L4 7 L7.6 1.6" stroke="#d23a2a" stroke-width="1.2" fill="none"/></svg>
<svg style="position:absolute;left:74.5px;top:332.78999999999996px" width="11" height="7" viewBox="0 0 11 7"><ellipse cx="5.5" cy="1.8" rx="5" ry="1.7" fill="#3aa0e0"/><rect x="0.5" y="1.8" width="10" height="4" fill="#1f78c0"/><ellipse cx="5.5" cy="5.8" rx="5" ry="1.5" fill="#1f78c0"/></svg>
<div class="t" style="left:87.5px;top:333.13px;font-size:8.5px;color:#222;font-weight:500;"><span class="l">S1</span></div>
<svg style="position:absolute;left:30.5px;top:346.92px" width="7" height="5" viewBox="0 0 7 5"><path d="M0.8 0.8 L3.5 3.6 L6.2 0.8" stroke="#333" stroke-width="1.3" fill="none"/></svg>
<svg style="position:absolute;left:40px;top:344.32px" width="12" height="10.2" viewBox="0 0 12 10.2"><polygon points="6.0,0 12,2.55 12,7.6499999999999995 6.0,10.2 0,7.6499999999999995 0,2.55" fill="#2a7ac8"/><polygon points="6.0,5.1 12,2.55 12,7.6499999999999995 6.0,10.2" fill="#1a5aa0"/></svg>
<div class="t" style="left:54px;top:346.26px;font-size:8.5px;color:#222;font-weight:500;"><span class="l">S1</span></div>
<div style="position:absolute;left:0px;top:354.99px;width:271px;height:13.13px;background:#f6f6f6"></div>
<svg style="position:absolute;left:39.5px;top:360.05px" width="7" height="5" viewBox="0 0 7 5"><path d="M0.8 0.8 L3.5 3.6 L6.2 0.8" stroke="#333" stroke-width="1.3" fill="none"/></svg>
<svg style="position:absolute;left:51px;top:358.3px" width="10" height="8.5" viewBox="0 0 10 8.5"><polygon points="5.0,0 10,2.125 10,6.375 5.0,8.5 0,6.375 0,2.125" fill="#f6b030"/><polygon points="5.0,4.25 10,2.125 10,6.375 5.0,8.5" fill="#e89a20"/></svg>
<div class="t" style="left:64px;top:359.39px;font-size:8.5px;color:#333;font-weight:500;"><span class="l">3D</span></div>
<svg style="position:absolute;left:61.5px;top:371.08px" width="10" height="10" viewBox="0 0 10 10"><rect x="0.5" y="0.5" width="8.5" height="8.5" fill="#fff" stroke="#444" stroke-width="0.9"/><path d="M2 4.6 L4 7 L7.6 1.6" stroke="#d23a2a" stroke-width="1.2" fill="none"/></svg>
<svg style="position:absolute;left:74.5px;top:372.18px" width="11" height="7" viewBox="0 0 11 7"><ellipse cx="5.5" cy="1.8" rx="5" ry="1.7" fill="#3aa0e0"/><rect x="0.5" y="1.8" width="10" height="4" fill="#1f78c0"/><ellipse cx="5.5" cy="5.8" rx="5" ry="1.5" fill="#1f78c0"/></svg>
<div class="t" style="left:87.5px;top:372.52px;font-size:8.5px;color:#222;font-weight:500;"><span class="l">S1</span></div>
<div style="position:absolute;left:0px;top:381.25px;width:271px;height:13.13px;background:#f6f6f6"></div>
<svg style="position:absolute;left:30.5px;top:386.31px" width="7" height="5" viewBox="0 0 7 5"><path d="M0.8 0.8 L3.5 3.6 L6.2 0.8" stroke="#333" stroke-width="1.3" fill="none"/></svg>
<svg style="position:absolute;left:40px;top:383.71px" width="12" height="10.2" viewBox="0 0 12 10.2"><polygon points="6.0,0 12,2.55 12,7.6499999999999995 6.0,10.2 0,7.6499999999999995 0,2.55" fill="#2a7ac8"/><polygon points="6.0,5.1 12,2.55 12,7.6499999999999995 6.0,10.2" fill="#1a5aa0"/></svg>
<div class="t" style="left:54px;top:385.65px;font-size:8.5px;color:#222;font-weight:500;"><span class="l">S16</span></div>
<svg style="position:absolute;left:39.5px;top:399.44px" width="7" height="5" viewBox="0 0 7 5"><path d="M0.8 0.8 L3.5 3.6 L6.2 0.8" stroke="#333" stroke-width="1.3" fill="none"/></svg>
<svg style="position:absolute;left:51px;top:397.69px" width="10" height="8.5" viewBox="0 0 10 8.5"><polygon points="5.0,0 10,2.125 10,6.375 5.0,8.5 0,6.375 0,2.125" fill="#f6b030"/><polygon points="5.0,4.25 10,2.125 10,6.375 5.0,8.5" fill="#e89a20"/></svg>
<div class="t" style="left:64px;top:398.78px;font-size:8.5px;color:#333;font-weight:500;"><span class="l">3D</span></div>
<div style="position:absolute;left:0px;top:407.51px;width:271px;height:13.13px;background:#f6f6f6"></div>
<svg style="position:absolute;left:61.5px;top:410.47px" width="10" height="10" viewBox="0 0 10 10"><rect x="0.5" y="0.5" width="8.5" height="8.5" fill="#fff" stroke="#444" stroke-width="0.9"/><path d="M2 4.6 L4 7 L7.6 1.6" stroke="#d23a2a" stroke-width="1.2" fill="none"/></svg>
<svg style="position:absolute;left:74.5px;top:411.57000000000005px" width="11" height="7" viewBox="0 0 11 7"><ellipse cx="5.5" cy="1.8" rx="5" ry="1.7" fill="#3aa0e0"/><rect x="0.5" y="1.8" width="10" height="4" fill="#1f78c0"/><ellipse cx="5.5" cy="5.8" rx="5" ry="1.5" fill="#1f78c0"/></svg>
<div class="t" style="left:87.5px;top:411.91px;font-size:8.5px;color:#222;font-weight:500;"><span class="l">S16</span></div>
<svg style="position:absolute;left:30.5px;top:425.70000000000005px" width="7" height="5" viewBox="0 0 7 5"><path d="M0.8 0.8 L3.5 3.6 L6.2 0.8" stroke="#333" stroke-width="1.3" fill="none"/></svg>
<svg style="position:absolute;left:40px;top:423.1px" width="12" height="10.2" viewBox="0 0 12 10.2"><polygon points="6.0,0 12,2.55 12,7.6499999999999995 6.0,10.2 0,7.6499999999999995 0,2.55" fill="#2a7ac8"/><polygon points="6.0,5.1 12,2.55 12,7.6499999999999995 6.0,10.2" fill="#1a5aa0"/></svg>
<div class="t" style="left:54px;top:425.04px;font-size:8.5px;color:#222;font-weight:500;"><span class="l">S1</span></div>
<div style="position:absolute;left:0px;top:433.77px;width:271px;height:13.13px;background:#f6f6f6"></div>
<svg style="position:absolute;left:39.5px;top:438.83000000000004px" width="7" height="5" viewBox="0 0 7 5"><path d="M0.8 0.8 L3.5 3.6 L6.2 0.8" stroke="#333" stroke-width="1.3" fill="none"/></svg>
<svg style="position:absolute;left:51px;top:437.08000000000004px" width="10" height="8.5" viewBox="0 0 10 8.5"><polygon points="5.0,0 10,2.125 10,6.375 5.0,8.5 0,6.375 0,2.125" fill="#f6b030"/><polygon points="5.0,4.25 10,2.125 10,6.375 5.0,8.5" fill="#e89a20"/></svg>
<div class="t" style="left:64px;top:438.17px;font-size:8.5px;color:#333;font-weight:500;"><span class="l">3D</span></div>
<svg style="position:absolute;left:61.5px;top:449.86px" width="10" height="10" viewBox="0 0 10 10"><rect x="0.5" y="0.5" width="8.5" height="8.5" fill="#fff" stroke="#444" stroke-width="0.9"/><path d="M2 4.6 L4 7 L7.6 1.6" stroke="#d23a2a" stroke-width="1.2" fill="none"/></svg>
<svg style="position:absolute;left:74.5px;top:450.96000000000004px" width="11" height="7" viewBox="0 0 11 7"><ellipse cx="5.5" cy="1.8" rx="5" ry="1.7" fill="#3aa0e0"/><rect x="0.5" y="1.8" width="10" height="4" fill="#1f78c0"/><ellipse cx="5.5" cy="5.8" rx="5" ry="1.5" fill="#1f78c0"/></svg>
<div class="t" style="left:87.5px;top:451.30px;font-size:8.5px;color:#222;font-weight:500;"><span class="l">S1</span></div>
<div style="position:absolute;left:0px;top:460.03px;width:271px;height:13.13px;background:#f6f6f6"></div>
<svg style="position:absolute;left:30.5px;top:465.09000000000003px" width="7" height="5" viewBox="0 0 7 5"><path d="M0.8 0.8 L3.5 3.6 L6.2 0.8" stroke="#333" stroke-width="1.3" fill="none"/></svg>
<svg style="position:absolute;left:40px;top:462.49px" width="12" height="10.2" viewBox="0 0 12 10.2"><polygon points="6.0,0 12,2.55 12,7.6499999999999995 6.0,10.2 0,7.6499999999999995 0,2.55" fill="#2a7ac8"/><polygon points="6.0,5.1 12,2.55 12,7.6499999999999995 6.0,10.2" fill="#1a5aa0"/></svg>
<div class="t" style="left:54px;top:464.43px;font-size:8.5px;color:#222;font-weight:500;"><span class="l">S1</span></div>
<svg style="position:absolute;left:39.5px;top:478.22px" width="7" height="5" viewBox="0 0 7 5"><path d="M0.8 0.8 L3.5 3.6 L6.2 0.8" stroke="#333" stroke-width="1.3" fill="none"/></svg>
<svg style="position:absolute;left:51px;top:476.47px" width="10" height="8.5" viewBox="0 0 10 8.5"><polygon points="5.0,0 10,2.125 10,6.375 5.0,8.5 0,6.375 0,2.125" fill="#f6b030"/><polygon points="5.0,4.25 10,2.125 10,6.375 5.0,8.5" fill="#e89a20"/></svg>
<div class="t" style="left:64px;top:477.56px;font-size:8.5px;color:#333;font-weight:500;"><span class="l">3D</span></div>
<div style="position:absolute;left:0px;top:486.29px;width:271px;height:13.13px;background:#f6f6f6"></div>
<svg style="position:absolute;left:61.5px;top:489.25px" width="10" height="10" viewBox="0 0 10 10"><rect x="0.5" y="0.5" width="8.5" height="8.5" fill="#fff" stroke="#444" stroke-width="0.9"/><path d="M2 4.6 L4 7 L7.6 1.6" stroke="#d23a2a" stroke-width="1.2" fill="none"/></svg>
<svg style="position:absolute;left:74.5px;top:490.35px" width="11" height="7" viewBox="0 0 11 7"><ellipse cx="5.5" cy="1.8" rx="5" ry="1.7" fill="#3aa0e0"/><rect x="0.5" y="1.8" width="10" height="4" fill="#1f78c0"/><ellipse cx="5.5" cy="5.8" rx="5" ry="1.5" fill="#1f78c0"/></svg>
<div class="t" style="left:87.5px;top:490.69px;font-size:8.5px;color:#222;font-weight:500;"><span class="l">S1</span></div>
<svg style="position:absolute;left:30.5px;top:504.48px" width="7" height="5" viewBox="0 0 7 5"><path d="M0.8 0.8 L3.5 3.6 L6.2 0.8" stroke="#333" stroke-width="1.3" fill="none"/></svg>
<svg style="position:absolute;left:40px;top:501.88px" width="12" height="10.2" viewBox="0 0 12 10.2"><polygon points="6.0,0 12,2.55 12,7.6499999999999995 6.0,10.2 0,7.6499999999999995 0,2.55" fill="#2a7ac8"/><polygon points="6.0,5.1 12,2.55 12,7.6499999999999995 6.0,10.2" fill="#1a5aa0"/></svg>
<div class="t" style="left:54px;top:503.82px;font-size:8.5px;color:#222;font-weight:500;"><span class="l">S1</span></div>
<div style="position:absolute;left:0px;top:512.54px;width:271px;height:13.13px;background:#f6f6f6"></div>
<svg style="position:absolute;left:39.5px;top:517.61px" width="7" height="5" viewBox="0 0 7 5"><path d="M0.8 0.8 L3.5 3.6 L6.2 0.8" stroke="#333" stroke-width="1.3" fill="none"/></svg>
<svg style="position:absolute;left:51px;top:515.86px" width="10" height="8.5" viewBox="0 0 10 8.5"><polygon points="5.0,0 10,2.125 10,6.375 5.0,8.5 0,6.375 0,2.125" fill="#f6b030"/><polygon points="5.0,4.25 10,2.125 10,6.375 5.0,8.5" fill="#e89a20"/></svg>
<div class="t" style="left:64px;top:516.95px;font-size:8.5px;color:#333;font-weight:500;"><span class="l">3D</span></div>
<svg style="position:absolute;left:61.5px;top:528.64px" width="10" height="10" viewBox="0 0 10 10"><rect x="0.5" y="0.5" width="8.5" height="8.5" fill="#fff" stroke="#444" stroke-width="0.9"/><path d="M2 4.6 L4 7 L7.6 1.6" stroke="#d23a2a" stroke-width="1.2" fill="none"/></svg>
<svg style="position:absolute;left:74.5px;top:529.74px" width="11" height="7" viewBox="0 0 11 7"><ellipse cx="5.5" cy="1.8" rx="5" ry="1.7" fill="#3aa0e0"/><rect x="0.5" y="1.8" width="10" height="4" fill="#1f78c0"/><ellipse cx="5.5" cy="5.8" rx="5" ry="1.5" fill="#1f78c0"/></svg>
<div class="t" style="left:87.5px;top:530.08px;font-size:8.5px;color:#222;font-weight:500;"><span class="l">S1</span></div>
<div style="position:absolute;left:0px;top:538.8px;width:271px;height:13.13px;background:#f6f6f6"></div>
<svg style="position:absolute;left:30.5px;top:543.87px" width="7" height="5" viewBox="0 0 7 5"><path d="M0.8 0.8 L3.5 3.6 L6.2 0.8" stroke="#333" stroke-width="1.3" fill="none"/></svg>
<svg style="position:absolute;left:40px;top:541.27px" width="12" height="10.2" viewBox="0 0 12 10.2"><polygon points="6.0,0 12,2.55 12,7.6499999999999995 6.0,10.2 0,7.6499999999999995 0,2.55" fill="#2a7ac8"/><polygon points="6.0,5.1 12,2.55 12,7.6499999999999995 6.0,10.2" fill="#1a5aa0"/></svg>
<div class="t" style="left:54px;top:543.21px;font-size:8.5px;color:#222;font-weight:500;"><span class="l">S1</span></div>
<svg style="position:absolute;left:39.5px;top:557.0px" width="7" height="5" viewBox="0 0 7 5"><path d="M0.8 0.8 L3.5 3.6 L6.2 0.8" stroke="#333" stroke-width="1.3" fill="none"/></svg>
<svg style="position:absolute;left:51px;top:555.25px" width="10" height="8.5" viewBox="0 0 10 8.5"><polygon points="5.0,0 10,2.125 10,6.375 5.0,8.5 0,6.375 0,2.125" fill="#f6b030"/><polygon points="5.0,4.25 10,2.125 10,6.375 5.0,8.5" fill="#e89a20"/></svg>
<div class="t" style="left:64px;top:556.34px;font-size:8.5px;color:#333;font-weight:500;"><span class="l">3D</span></div>
<div style="position:absolute;left:0px;top:565.06px;width:271px;height:13.13px;background:#f6f6f6"></div>
<svg style="position:absolute;left:61.5px;top:568.03px" width="10" height="10" viewBox="0 0 10 10"><rect x="0.5" y="0.5" width="8.5" height="8.5" fill="#fff" stroke="#444" stroke-width="0.9"/><path d="M2 4.6 L4 7 L7.6 1.6" stroke="#d23a2a" stroke-width="1.2" fill="none"/></svg>
<svg style="position:absolute;left:74.5px;top:569.13px" width="11" height="7" viewBox="0 0 11 7"><ellipse cx="5.5" cy="1.8" rx="5" ry="1.7" fill="#3aa0e0"/><rect x="0.5" y="1.8" width="10" height="4" fill="#1f78c0"/><ellipse cx="5.5" cy="5.8" rx="5" ry="1.5" fill="#1f78c0"/></svg>
<div class="t" style="left:87.5px;top:569.47px;font-size:8.5px;color:#222;font-weight:500;"><span class="l">S1</span></div>
<svg style="position:absolute;left:30.5px;top:583.26px" width="7" height="5" viewBox="0 0 7 5"><path d="M0.8 0.8 L3.5 3.6 L6.2 0.8" stroke="#333" stroke-width="1.3" fill="none"/></svg>
<svg style="position:absolute;left:40px;top:580.66px" width="12" height="10.2" viewBox="0 0 12 10.2"><polygon points="6.0,0 12,2.55 12,7.6499999999999995 6.0,10.2 0,7.6499999999999995 0,2.55" fill="#2a7ac8"/><polygon points="6.0,5.1 12,2.55 12,7.6499999999999995 6.0,10.2" fill="#1a5aa0"/></svg>
<div class="t" style="left:54px;top:582.60px;font-size:8.5px;color:#222;font-weight:500;"><span class="l">S1</span></div>
<div style="position:absolute;left:0px;top:591.32px;width:271px;height:13.13px;background:#f6f6f6"></div>
<svg style="position:absolute;left:39.5px;top:596.39px" width="7" height="5" viewBox="0 0 7 5"><path d="M0.8 0.8 L3.5 3.6 L6.2 0.8" stroke="#333" stroke-width="1.3" fill="none"/></svg>
<svg style="position:absolute;left:51px;top:594.64px" width="10" height="8.5" viewBox="0 0 10 8.5"><polygon points="5.0,0 10,2.125 10,6.375 5.0,8.5 0,6.375 0,2.125" fill="#f6b030"/><polygon points="5.0,4.25 10,2.125 10,6.375 5.0,8.5" fill="#e89a20"/></svg>
<div class="t" style="left:64px;top:595.73px;font-size:8.5px;color:#333;font-weight:500;"><span class="l">3D</span></div>
<svg style="position:absolute;left:61.5px;top:607.42px" width="10" height="10" viewBox="0 0 10 10"><rect x="0.5" y="0.5" width="8.5" height="8.5" fill="#fff" stroke="#444" stroke-width="0.9"/><path d="M2 4.6 L4 7 L7.6 1.6" stroke="#d23a2a" stroke-width="1.2" fill="none"/></svg>
<svg style="position:absolute;left:74.5px;top:608.52px" width="11" height="7" viewBox="0 0 11 7"><ellipse cx="5.5" cy="1.8" rx="5" ry="1.7" fill="#3aa0e0"/><rect x="0.5" y="1.8" width="10" height="4" fill="#1f78c0"/><ellipse cx="5.5" cy="5.8" rx="5" ry="1.5" fill="#1f78c0"/></svg>
<div class="t" style="left:87.5px;top:608.86px;font-size:8.5px;color:#222;font-weight:500;"><span class="l">S1</span></div>
<div style="position:absolute;left:2px;top:235.5px;width:86.5px;height:19px;border:2px solid #d8453e;box-sizing:border-box"></div>
<svg style="position:absolute;left:111px;top:216.5px" width="58" height="58" viewBox="0 0 58 58"><circle cx="29.1" cy="28.7" r="28.4" fill="#4a78c6"/><path d="M29.9 13 L34.3 13 L34.3 42.5 L30.1 42.5 L30.1 19.8 Q26.5 23.3 21.5 25 L21.5 21.6 Q27 19.2 29.9 13 Z" fill="#fff"/></svg>
<div style="position:absolute;left:271px;top:158px;width:12px;height:420px;background:#e0e4ec"></div>
<div style="position:absolute;left:283px;top:141px;width:4.5px;height:437px;background:#dadada"></div>
<svg style="position:absolute;left:274px;top:162px" width="8" height="5" viewBox="0 0 8 5"><polygon points="0,5 8,5 4,0" fill="#555"/></svg>
<div style="position:absolute;left:273.5px;top:267px;width:8px;height:214px;background:#f0f2f8;border:1px solid #d0d6de;box-sizing:border-box"></div>
<div style="position:absolute;left:275.5px;top:372px;width:5px;height:5px;background:#a8a8a8;border-radius:1px"></div>
</div>
</body></html>
